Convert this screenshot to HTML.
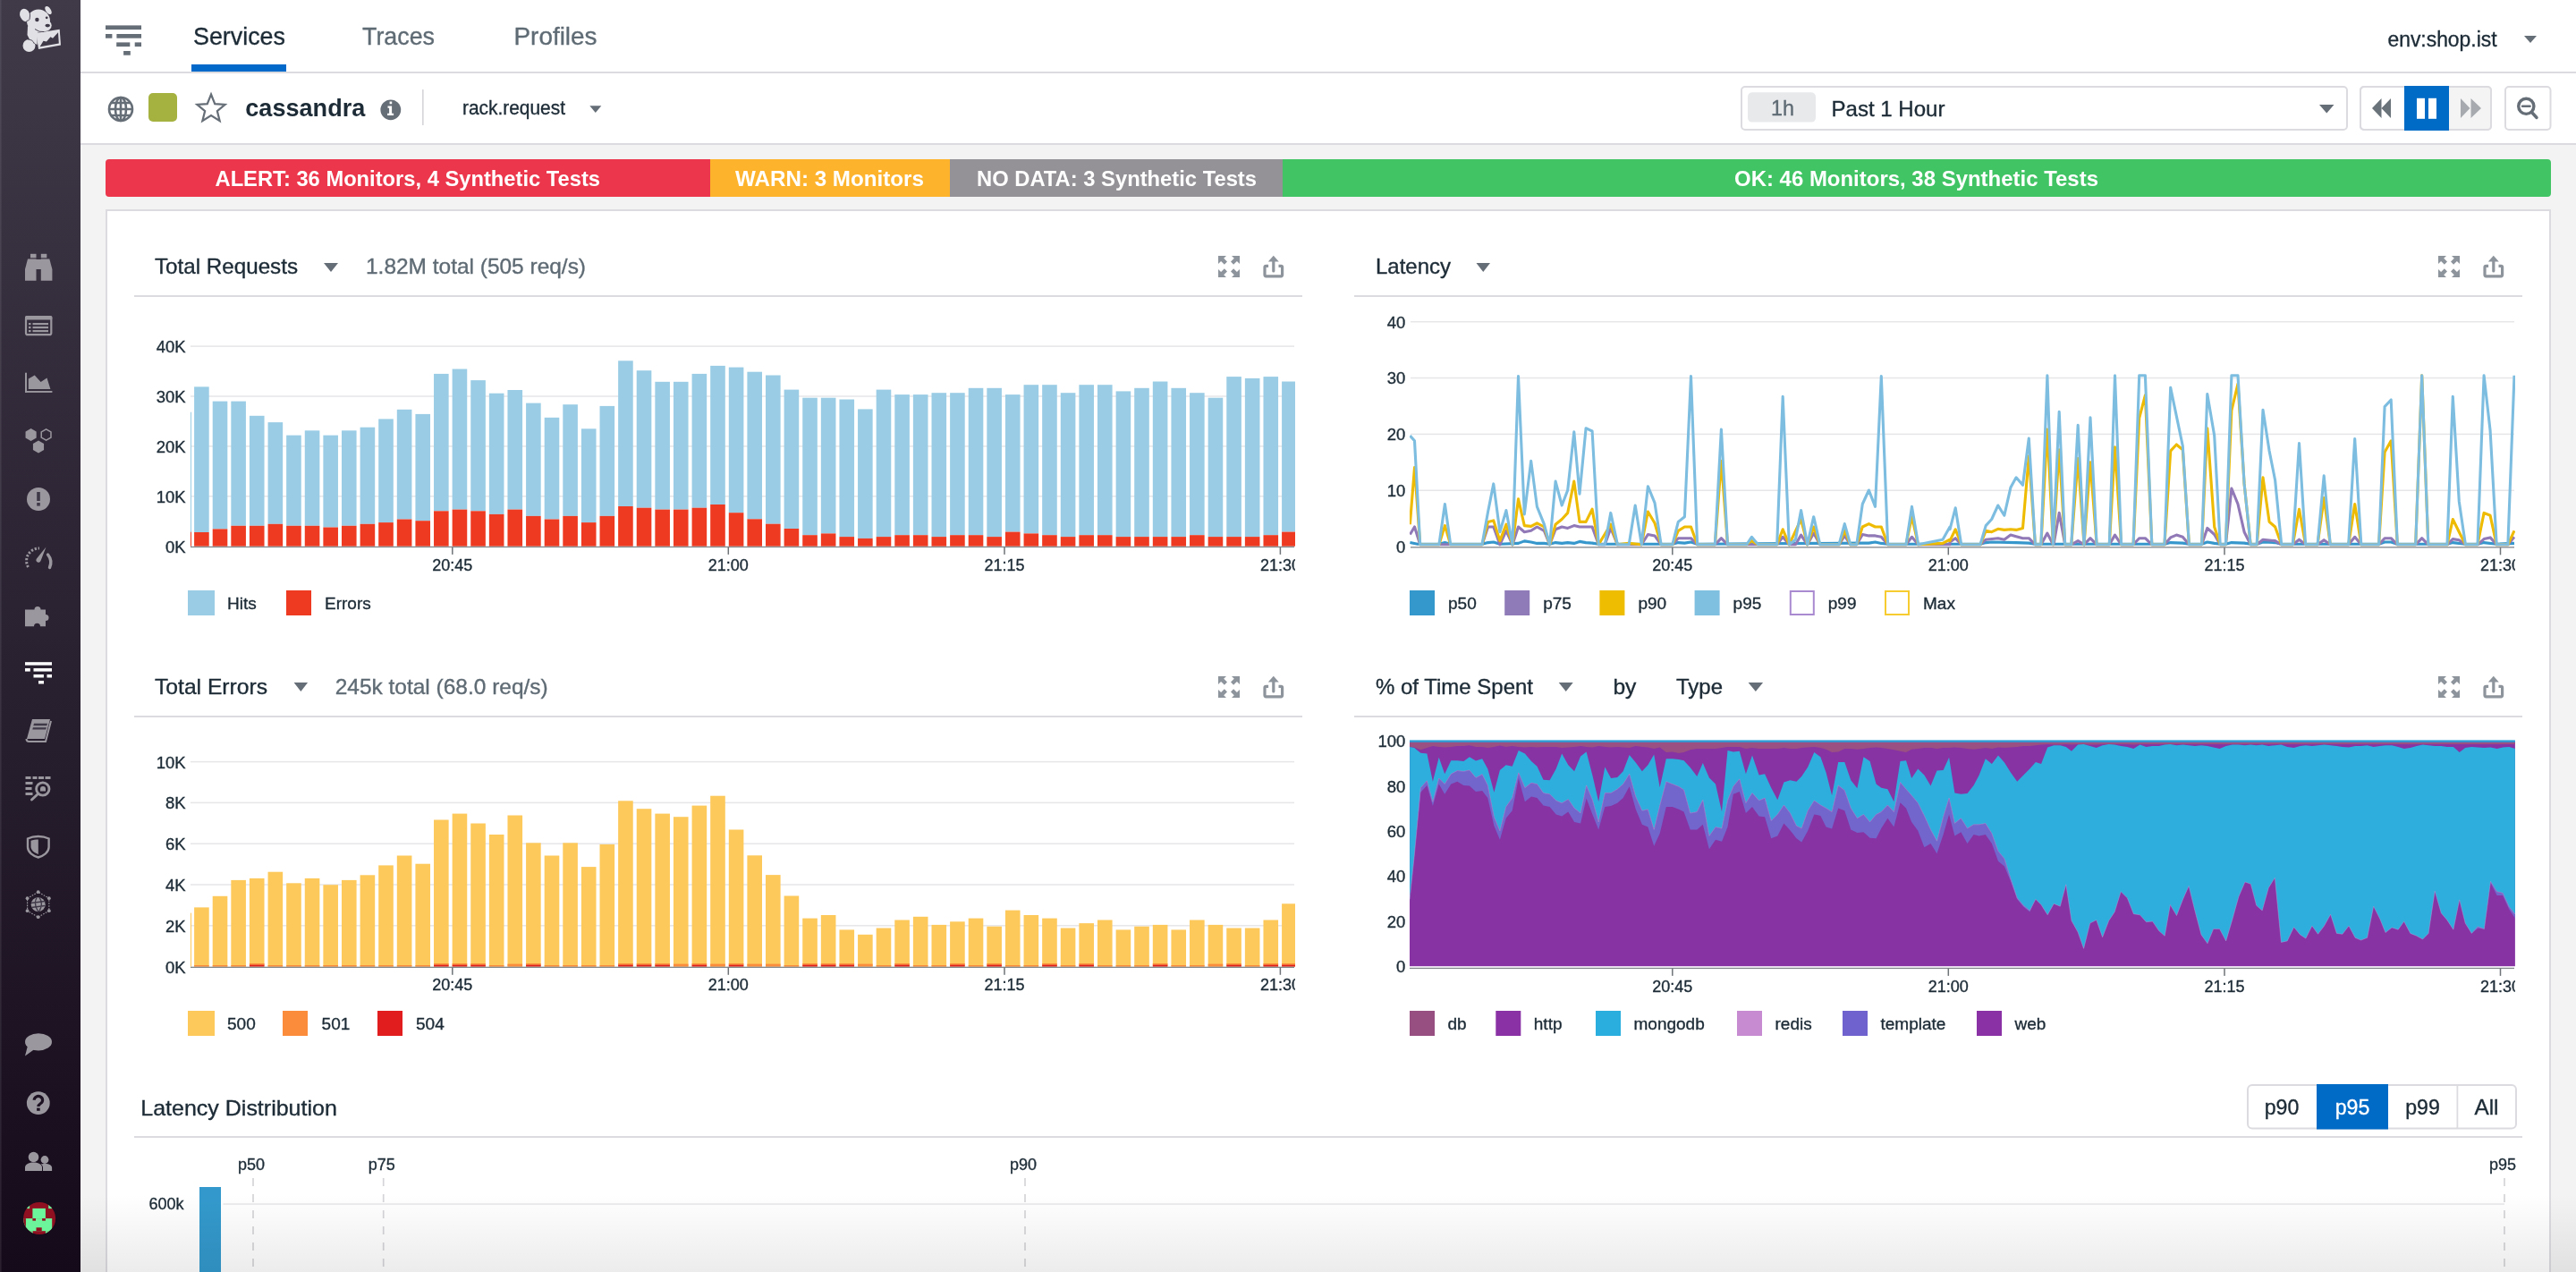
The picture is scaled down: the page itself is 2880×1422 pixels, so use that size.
<!DOCTYPE html>
<html><head><meta charset="utf-8"><title>cassandra | Datadog APM</title>
<style>html,body{margin:0;padding:0;width:2880px;height:1422px;overflow:hidden;background:#f3f3f3}
svg{display:block;font-family:"Liberation Sans", sans-serif;will-change:transform}</style></head>
<body><svg width="2880" height="1422" viewBox="0 0 2880 1422">
<rect x="0" y="0" width="2880" height="1422" fill="#f3f3f3"/>
<defs><linearGradient id="sb" x1="0" y1="0" x2="0" y2="1"><stop offset="0" stop-color="#3f3948"/><stop offset="1" stop-color="#150a1a"/></linearGradient><linearGradient id="fade" x1="0" y1="0" x2="0" y2="1"><stop offset="0" stop-color="#000" stop-opacity="0"/><stop offset="1" stop-color="#000" stop-opacity="0.075"/></linearGradient><clipPath id="c1"><rect x="213" y="340" width="1235" height="300"/></clipPath><clipPath id="c2"><rect x="213" y="820" width="1235" height="300"/></clipPath><clipPath id="c3"><rect x="1576" y="340" width="1236" height="300"/></clipPath><clipPath id="c4"><rect x="1576" y="820" width="1236" height="300"/></clipPath></defs>
<rect x="90" y="0" width="2790" height="80" fill="#ffffff"/>
<rect x="90" y="80" width="2790" height="2" fill="#dcdbe0"/>
<rect x="90" y="82" width="2790" height="78" fill="#ffffff"/>
<rect x="90" y="160" width="2790" height="2" fill="#dcdbe0"/>
<rect x="0" y="0" width="90" height="1422" fill="url(#sb)"/>
<g fill="#e1e0e4"><ellipse cx="28" cy="17" rx="5.6" ry="7.4" transform="rotate(-25 28 17)"/><ellipse cx="43" cy="23.5" rx="13" ry="13"/><ellipse cx="50.5" cy="28.5" rx="7.2" ry="6.4"/><ellipse cx="54" cy="11.5" rx="2.8" ry="5.2" transform="rotate(-35 54 11.5)"/><path d="M31 29L42 34L41.5 50L34 46L30.5 39Z"/><circle cx="32.5" cy="51" r="7"/><path d="M40.5 36.9L66.7 32.7L68 50.4L43 55Z"/></g>
<g fill="#3e3847"><circle cx="41.4" cy="22" r="2.2"/><circle cx="52.2" cy="19.8" r="1.4"/><ellipse cx="53.2" cy="28.6" rx="2.8" ry="1.8"/><path d="M44.6 52.2L48.5 45.8L52 46.5L56.5 41.2L59 42.8L65 36.3L65.8 48.6Z"/></g><g fill="none" stroke="#3e3847" stroke-width="0.9"><path d="M31.5 10.5Q34.5 14 33 21.5Q32 23.5 29.5 23.5"/><path d="M39 32.5Q44 36.5 49 35.5"/><path d="M31.5 44.2Q36.5 44 38.5 49"/></g>
<g fill="#9b979f"><rect x="34" y="283.8" width="6.5" height="4.5"/><rect x="45.8" y="283.8" width="6.5" height="4.5"/><path d="M31 289.5H40.5V313.7H28V301Z"/><path d="M45.8 289.5H55.3L58.4 301V313.7H45.8Z"/><rect x="40" y="290" width="6" height="11"/></g>
<g fill="none" stroke="#9b979f" stroke-width="2.2"><rect x="29" y="354.1" width="28.3" height="20.1" rx="2"/></g>
<g fill="#9b979f"><rect x="28" y="353" width="30.4" height="4.5" rx="1.5"/><rect x="32" y="361" width="2.5" height="2.2"/><rect x="36.5" y="361" width="17.5" height="2.2"/><rect x="32" y="365" width="2.5" height="2.2"/><rect x="36.5" y="365" width="17.5" height="2.2"/><rect x="32" y="369" width="2.5" height="2.2"/><rect x="36.5" y="369" width="17.5" height="2.2"/></g>
<g fill="#9b979f"><rect x="28" y="416.7" width="2" height="22.2"/><rect x="28" y="437" width="30.4" height="1.9"/><path d="M31.8 435V423.5L38.7 419.6L45.6 427L52.5 422.6L56.4 435Z"/></g>
<polygon points="40.66,489.50 34.60,493.00 28.54,489.50 28.54,482.50 34.60,479.00 40.66,482.50" fill="#9b979f"/>
<polygon points="49.06,503.00 43.00,506.50 36.94,503.00 36.94,496.00 43.00,492.50 49.06,496.00" fill="#9b979f"/>
<polygon points="56.97,489.10 51.60,492.20 46.23,489.10 46.23,482.90 51.60,479.80 56.97,482.90" fill="none" stroke="#9b979f" stroke-width="1.5"/>
<circle cx="43" cy="558" r="13" fill="#9b979f"/><rect x="41.2" y="550" width="3.6" height="10" fill="#3e3847"/><rect x="41.2" y="562" width="3.6" height="3.6" fill="#3e3847"/>
<path d="M31.5 634A14 14 0 0 1 44 613" fill="none" stroke="#9b979f" stroke-width="3" stroke-dasharray="2.2,1.8"/>
<path d="M53.5 620A14 14 0 0 1 55.5 634.5" fill="none" stroke="#9b979f" stroke-width="3.4" stroke-linecap="round"/>
<path d="M51.5 611.5L45.5 627A2.6 2.6 0 1 1 40.8 624.8Z" fill="#9b979f"/>
<path d="M28 681.5H38.5A3.5 3.5 0 1 1 45.5 681.5H51V687A3.2 3.2 0 1 1 51 694V700.3H45A3.5 3.5 0 1 0 38 700.3H28Z" fill="#9b979f"/>
<g fill="#fff"><rect x="28" y="740.2" width="30" height="3.5"/><rect x="28" y="747.1" width="5.8" height="3.5"/><rect x="37.5" y="747.1" width="20.5" height="3.5"/><rect x="37.5" y="754" width="11.4" height="3.5"/><rect x="52.5" y="754" width="5.5" height="3.5"/><rect x="43" y="761" width="6" height="3.5"/></g>
<g fill="#9b979f"><path d="M36 804H56L50 826H30Z"/></g>
<path d="M57 806L51 829H32.5a3 3 0 0 1 -3 -3" fill="none" stroke="#9b979f" stroke-width="2"/>
<path d="M38 808.7H53L52.4 811.3H37.3Z M36.9 813.2H51.9L51.3 815.6H36.3Z" fill="#3e3847"/>
<g fill="#9b979f"><rect x="28.5" y="868" width="6" height="3"/><rect x="36.5" y="868" width="5" height="3"/><rect x="43" y="868" width="6" height="3"/><rect x="50.5" y="868" width="6" height="3"/><rect x="28.5" y="874" width="8" height="3"/><rect x="28.5" y="880" width="7" height="3"/><rect x="28.5" y="886" width="8" height="3"/></g>
<circle cx="47.8" cy="882" r="7.2" fill="none" stroke="#9b979f" stroke-width="2.8"/><path d="M42.5 887.5L35.5 894" stroke="#9b979f" stroke-width="3" stroke-linecap="round"/><path d="M45 884.5V882A3 3 0 0 1 51 882V884.5Z" fill="#9b979f"/>
<path d="M42.8 935C37 935 33 936.5 31 937.5V947C31 953 37 957 42.8 958.5C48.5 957 54.6 953 54.6 947V937.5C52.5 936.5 48.5 935 42.8 935Z" fill="none" stroke="#9b979f" stroke-width="2.4"/>
<path d="M42.8 938.5V955C38.5 953.5 34.5 950.5 34.5 946.5V939.8C37 939 40 938.5 42.8 938.5Z" fill="#9b979f"/>
<g fill="none" stroke="#9b979f" stroke-width="1.2" stroke-dasharray="1.6,1.4"><polygon points="54.82,1018.20 42.70,1025.20 30.58,1018.20 30.58,1004.20 42.70,997.20 54.82,1004.20"/></g>
<g fill="#9b979f"><circle cx="54.82" cy="1018.20" r="1.9"/><circle cx="42.70" cy="1025.20" r="1.9"/><circle cx="30.58" cy="1018.20" r="1.9"/><circle cx="30.58" cy="1004.20" r="1.9"/><circle cx="42.70" cy="997.20" r="1.9"/><circle cx="54.82" cy="1004.20" r="1.9"/></g>
<circle cx="42.7" cy="1011.2" r="8" fill="#9b979f"/><path d="M34.7 1009.5L50.7 1007.5M35 1014.5L50.5 1012.5M41 1003.5Q37 1011 43 1019.2M44 1003.2Q49 1011 43.5 1019.2" stroke="#3e3847" stroke-width="1.3" fill="none"/>
<ellipse cx="43" cy="1164.8" rx="15" ry="9.6" fill="#9b979f"/><path d="M31 1169L28 1180.4L38.5 1173Z" fill="#9b979f"/>
<circle cx="42.8" cy="1233.1" r="12.9" fill="#9b979f"/>
<path d="M38.2 1229.8A4.7 4.4 0 1 1 45.5 1233.5C43.8 1234.6 42.9 1235.2 42.9 1237" fill="none" stroke="#1d1222" stroke-width="3.2"/><rect x="41.1" y="1238.6" width="3.6" height="3.2" fill="#1d1222"/>
<g fill="#9b979f"><circle cx="37.5" cy="1293.5" r="5.8"/><path d="M28 1309V1305C28 1302 31.5 1299.5 37.5 1299.5C43.5 1299.5 47 1302 47 1305V1309Z"/><circle cx="50" cy="1296.5" r="4.4"/><path d="M48 1309V1305.5C48 1303.5 46.8 1302.2 45.5 1301.6C46.5 1301.2 48 1301 50 1301C55.5 1301 58.1 1303 58.1 1305.5V1309Z"/></g>
<clipPath id="av"><circle cx="44.1" cy="1362" r="18"/></clipPath>
<g clip-path="url(#av)"><rect x="25" y="1343" width="38" height="38" fill="#8f1021"/><rect x="29.6" y="1346" width="3.5" height="5.1" fill="#6cf59a"/><rect x="54.2" y="1346" width="4.5" height="5.1" fill="#6cf59a"/><rect x="36.4" y="1350.9" width="14.5" height="11.3" fill="#6cf59a"/><rect x="25" y="1362.1" width="33.2" height="14.1" fill="#6cf59a"/><rect x="25" y="1376.2" width="11.7" height="6" fill="#6cf59a"/><rect x="50.9" y="1376.2" width="8" height="6" fill="#6cf59a"/><rect x="25" y="1362.1" width="3.9" height="10" fill="#8f1021"/><rect x="36.4" y="1362.1" width="3.6" height="2.6" fill="#8f1021"/><rect x="47.1" y="1362.1" width="3.8" height="2.6" fill="#8f1021"/><rect x="40.5" y="1372.3" width="6.2" height="4" fill="#8f1021"/></g>
<rect x="0" y="0" width="1.6" height="1422" fill="#ffffff" fill-opacity="0.09"/>
<rect x="118" y="28.4" width="40" height="4.7" fill="#656d76"/>
<rect x="118" y="38" width="7.4" height="4.7" fill="#656d76"/>
<rect x="130.4" y="38" width="27.6" height="4.7" fill="#656d76"/>
<rect x="130.2" y="47.4" width="15.1" height="4.7" fill="#656d76"/>
<rect x="150.7" y="47.4" width="7.3" height="4.7" fill="#656d76"/>
<rect x="138.1" y="57" width="7.7" height="4.7" fill="#656d76"/>
<text x="216" y="50.2" font-size="28" fill="#1c2b36" font-weight="normal" text-anchor="start" textLength="103" lengthAdjust="spacingAndGlyphs" stroke="#1c2b36" stroke-width="0.35">Services</text>
<rect x="214" y="72" width="106" height="8" fill="#0069c9"/>
<text x="405" y="50.2" font-size="28" fill="#5f6b74" font-weight="normal" text-anchor="start" textLength="81" lengthAdjust="spacingAndGlyphs" stroke="#5f6b74" stroke-width="0.35">Traces</text>
<text x="574.5" y="50.2" font-size="28" fill="#5f6b74" font-weight="normal" text-anchor="start" textLength="93" lengthAdjust="spacingAndGlyphs" stroke="#5f6b74" stroke-width="0.35">Profiles</text>
<text x="2669.5" y="52" font-size="23.5" fill="#1c2b36" font-weight="normal" text-anchor="start" textLength="122" lengthAdjust="spacingAndGlyphs" stroke="#1c2b36" stroke-width="0.35">env:shop.ist</text>
<path d="M2822 40L2836 40L2829.0 48Z" fill="#656d76"/>
<g fill="none" stroke="#656d76" stroke-width="2.6"><circle cx="135" cy="122" r="13"/><ellipse cx="135" cy="122" rx="6" ry="13"/><path d="M135 109V135M122 122H148M124 115H146M124 129H146"/></g>
<rect x="166" y="104" width="32" height="32" fill="#a5b240" rx="5"/>
<polygon points="236.00,105.50 240.23,116.08 251.60,116.83 242.85,124.12 245.64,135.17 236.00,129.10 226.36,135.17 229.15,124.12 220.40,116.83 231.77,116.08" fill="none" stroke="#656d76" stroke-width="2.2" stroke-linejoin="miter"/>
<text x="274.3" y="130.1" font-size="28" fill="#1c2b36" font-weight="bold" text-anchor="start" textLength="134" lengthAdjust="spacingAndGlyphs">cassandra</text>
<circle cx="436.8" cy="122.8" r="11.4" fill="#656d76"/>
<path d="M433.5 118.5h4.6v8.2h2v2.2h-7v-2.2h2v-6h-1.6z M435.6 113.5h2.6v2.8h-2.6z" fill="#fff"/>
<rect x="472" y="100" width="1.6" height="40" fill="#d5d5da"/>
<text x="517" y="127.8" font-size="21.5" fill="#1c2b36" font-weight="normal" text-anchor="start" textLength="115" lengthAdjust="spacingAndGlyphs" stroke="#1c2b36" stroke-width="0.35">rack.request</text>
<path d="M659.3 118.2L672.3 118.2L665.8 125.9Z" fill="#656d76"/>
<rect x="1947" y="97" width="677" height="48" rx="4" fill="#fff" stroke="#dcdbe0" stroke-width="2"/>
<rect x="1954" y="103.2" width="76" height="33.4" fill="#e8e9eb" rx="5"/>
<text x="1980" y="128.6" font-size="24" fill="#5f6b74" font-weight="normal" text-anchor="start" textLength="26" lengthAdjust="spacingAndGlyphs" stroke="#5f6b74" stroke-width="0.35">1h</text>
<text x="2047.5" y="130" font-size="24" fill="#1c2b36" font-weight="normal" text-anchor="start" textLength="127" lengthAdjust="spacingAndGlyphs" stroke="#1c2b36" stroke-width="0.35">Past 1 Hour</text>
<path d="M2593 117L2609.5 117L2601.25 126.5Z" fill="#656d76"/>
<rect x="2639" y="97" width="146" height="48" rx="4" fill="#fff" stroke="#dcdbe0" stroke-width="2"/>
<path d="M2738 97H2781a4 4 0 0 1 4 4V141a4 4 0 0 1 -4 4H2738Z" fill="#f4f4f4"/>
<rect x="2639" y="97" width="146" height="48" rx="4" fill="none" stroke="#dcdbe0" stroke-width="2"/>
<rect x="2688" y="96" width="50" height="50" fill="#006bc7"/>
<rect x="2702" y="109.8" width="9" height="23" fill="#fff"/>
<rect x="2715" y="109.8" width="9" height="23" fill="#fff"/>
<path d="M2652 121L2662.5 110V132Z M2662.5 121L2673 110V132Z" fill="#6b737a"/>
<path d="M2751 110L2761.5 121L2751 132Z M2762.5 110L2774 121L2762.5 132Z" fill="#a7abb0"/>
<rect x="2801" y="97" width="50.5" height="48" rx="4" fill="#fff" stroke="#dcdbe0" stroke-width="2"/>
<g fill="none" stroke="#656d76" stroke-width="3.4" stroke-linecap="round"><circle cx="2824.3" cy="118.8" r="8.6"/><path d="M2830.5 125.5L2836 131.5"/><path d="M2820 118.8H2828.6" stroke-width="2.4"/></g>
<path d="M122 178H794V220H122a4 4 0 0 1 -4 -4V182a4 4 0 0 1 4 -4Z" fill="#eb364b"/>
<rect x="794" y="178" width="268" height="42" fill="#fdb32b"/>
<rect x="1062" y="178" width="372" height="42" fill="#949296"/>
<path d="M1434 178H2848a4 4 0 0 1 4 4V216a4 4 0 0 1 -4 4H1434Z" fill="#41c464"/>
<text x="240.5" y="208.3" font-size="24.5" fill="#fff" font-weight="bold" text-anchor="start" textLength="430.5" lengthAdjust="spacingAndGlyphs">ALERT: 36 Monitors, 4 Synthetic Tests</text>
<text x="822" y="208.3" font-size="24.5" fill="#fff" font-weight="bold" text-anchor="start" textLength="211" lengthAdjust="spacingAndGlyphs">WARN: 3 Monitors</text>
<text x="1092" y="208.3" font-size="24.5" fill="#fff" font-weight="bold" text-anchor="start" textLength="313" lengthAdjust="spacingAndGlyphs">NO DATA: 3 Synthetic Tests</text>
<text x="1939" y="208.3" font-size="24.5" fill="#fff" font-weight="bold" text-anchor="start" textLength="407" lengthAdjust="spacingAndGlyphs">OK: 46 Monitors, 38 Synthetic Tests</text>
<rect x="119" y="235" width="2732" height="1300" fill="#fff" stroke="#dcdbe0" stroke-width="2"/>
<text x="173" y="306" font-size="24" fill="#1c2b36" font-weight="normal" text-anchor="start" textLength="160" lengthAdjust="spacingAndGlyphs" stroke="#1c2b36" stroke-width="0.35">Total Requests</text>
<path d="M362 294L378 294L370.0 304Z" fill="#656d76"/>
<text x="409" y="306" font-size="24" fill="#5f6b74" font-weight="normal" text-anchor="start" textLength="246" lengthAdjust="spacingAndGlyphs" stroke="#5f6b74" stroke-width="0.35">1.82M total (505 req/s)</text>
<g transform="translate(1361.5,285.5)" fill="#8e949b"><path d="M0.5 0.5H9.5L6.7 3.3L10.5 7.1L7.4 10.2L3.6 6.4L0.5 9.5Z"/><path d="M24.5 0.5H15.5L18.3 3.3L14.5 7.1L17.6 10.2L21.4 6.4L24.5 9.5Z"/><path d="M0.5 24.5H9.5L6.7 21.7L10.5 17.9L7.4 14.8L3.6 18.6L0.5 15.5Z"/><path d="M24.5 24.5H15.5L18.3 21.7L14.5 17.9L17.6 14.8L21.4 18.6L24.5 15.5Z"/></g>
<g transform="translate(1412.3,285.5)" fill="none" stroke="#8e949b" stroke-width="3.2"><path d="M5.8 11.8H3.2a1.5 1.5 0 0 0 -1.5 1.5V21.8a1.5 1.5 0 0 0 1.5 1.5H19.8a1.5 1.5 0 0 0 1.5 -1.5V13.3a1.5 1.5 0 0 0 -1.5 -1.5H17.2"/><path d="M11.5 17.5V5.5" stroke-linecap="round"/></g><path d="M1417.8 292.5L1423.8 285.8L1429.8 292.5Z" fill="#8e949b"/>
<rect x="150.00" y="330.00" width="1306.00" height="2.00" fill="#dcdbe0"/>
<rect x="213.00" y="386.35" width="1234.00" height="1.50" fill="#e6e6e9"/>
<text x="207.6" y="394.00000000000006" font-size="18.5" fill="#1c2b36" font-weight="normal" text-anchor="end" stroke="#1c2b36" stroke-width="0.35">40K</text>
<rect x="213.00" y="442.25" width="1234.00" height="1.50" fill="#e6e6e9"/>
<text x="207.6" y="449.90000000000003" font-size="18.5" fill="#1c2b36" font-weight="normal" text-anchor="end" stroke="#1c2b36" stroke-width="0.35">30K</text>
<rect x="213.00" y="498.15" width="1234.00" height="1.50" fill="#e6e6e9"/>
<text x="207.6" y="505.80000000000007" font-size="18.5" fill="#1c2b36" font-weight="normal" text-anchor="end" stroke="#1c2b36" stroke-width="0.35">20K</text>
<rect x="213.00" y="554.05" width="1234.00" height="1.50" fill="#e6e6e9"/>
<text x="207.6" y="561.7" font-size="18.5" fill="#1c2b36" font-weight="normal" text-anchor="end" stroke="#1c2b36" stroke-width="0.35">10K</text>
<text x="207.6" y="617.6" font-size="18.5" fill="#1c2b36" font-weight="normal" text-anchor="end" stroke="#1c2b36" stroke-width="0.35">0K</text>
<g clip-path="url(#c1)">
<rect x="197.39" y="460.70" width="16.60" height="150.00" fill="#9acde5"/>
<rect x="197.39" y="594.70" width="16.60" height="16.00" fill="#ee3a20"/>
<rect x="217.10" y="432.40" width="16.60" height="162.60" fill="#9acde5"/>
<rect x="217.10" y="595.00" width="16.60" height="15.70" fill="#ee3a20"/>
<rect x="237.71" y="448.60" width="16.60" height="142.80" fill="#9acde5"/>
<rect x="237.71" y="591.40" width="16.60" height="19.30" fill="#ee3a20"/>
<rect x="258.32" y="448.60" width="16.60" height="139.20" fill="#9acde5"/>
<rect x="258.32" y="587.80" width="16.60" height="22.90" fill="#ee3a20"/>
<rect x="278.93" y="464.80" width="16.60" height="123.00" fill="#9acde5"/>
<rect x="278.93" y="587.80" width="16.60" height="22.90" fill="#ee3a20"/>
<rect x="299.54" y="472.10" width="16.60" height="113.70" fill="#9acde5"/>
<rect x="299.54" y="585.80" width="16.60" height="24.90" fill="#ee3a20"/>
<rect x="320.15" y="486.60" width="16.60" height="101.20" fill="#9acde5"/>
<rect x="320.15" y="587.80" width="16.60" height="22.90" fill="#ee3a20"/>
<rect x="340.76" y="481.30" width="16.60" height="106.50" fill="#9acde5"/>
<rect x="340.76" y="587.80" width="16.60" height="22.90" fill="#ee3a20"/>
<rect x="361.37" y="486.60" width="16.60" height="102.90" fill="#9acde5"/>
<rect x="361.37" y="589.50" width="16.60" height="21.20" fill="#ee3a20"/>
<rect x="381.98" y="481.30" width="16.60" height="106.50" fill="#9acde5"/>
<rect x="381.98" y="587.80" width="16.60" height="22.90" fill="#ee3a20"/>
<rect x="402.59" y="477.70" width="16.60" height="108.10" fill="#9acde5"/>
<rect x="402.59" y="585.80" width="16.60" height="24.90" fill="#ee3a20"/>
<rect x="423.20" y="468.40" width="16.60" height="115.70" fill="#9acde5"/>
<rect x="423.20" y="584.10" width="16.60" height="26.60" fill="#ee3a20"/>
<rect x="443.81" y="457.80" width="16.60" height="122.70" fill="#9acde5"/>
<rect x="443.81" y="580.50" width="16.60" height="30.20" fill="#ee3a20"/>
<rect x="464.42" y="462.90" width="16.60" height="119.30" fill="#9acde5"/>
<rect x="464.42" y="582.20" width="16.60" height="28.50" fill="#ee3a20"/>
<rect x="485.03" y="417.90" width="16.60" height="153.40" fill="#9acde5"/>
<rect x="485.03" y="571.30" width="16.60" height="39.40" fill="#ee3a20"/>
<rect x="505.64" y="412.50" width="16.60" height="157.10" fill="#9acde5"/>
<rect x="505.64" y="569.60" width="16.60" height="41.10" fill="#ee3a20"/>
<rect x="526.25" y="425.10" width="16.60" height="146.20" fill="#9acde5"/>
<rect x="526.25" y="571.30" width="16.60" height="39.40" fill="#ee3a20"/>
<rect x="546.86" y="439.70" width="16.60" height="135.20" fill="#9acde5"/>
<rect x="546.86" y="574.90" width="16.60" height="35.80" fill="#ee3a20"/>
<rect x="567.47" y="436.00" width="16.60" height="133.60" fill="#9acde5"/>
<rect x="567.47" y="569.60" width="16.60" height="41.10" fill="#ee3a20"/>
<rect x="588.08" y="450.60" width="16.60" height="126.30" fill="#9acde5"/>
<rect x="588.08" y="576.90" width="16.60" height="33.80" fill="#ee3a20"/>
<rect x="608.69" y="466.80" width="16.60" height="113.70" fill="#9acde5"/>
<rect x="608.69" y="580.50" width="16.60" height="30.20" fill="#ee3a20"/>
<rect x="629.30" y="452.20" width="16.60" height="124.70" fill="#9acde5"/>
<rect x="629.30" y="576.90" width="16.60" height="33.80" fill="#ee3a20"/>
<rect x="649.91" y="479.30" width="16.60" height="104.80" fill="#9acde5"/>
<rect x="649.91" y="584.10" width="16.60" height="26.60" fill="#ee3a20"/>
<rect x="670.52" y="453.90" width="16.60" height="123.00" fill="#9acde5"/>
<rect x="670.52" y="576.90" width="16.60" height="33.80" fill="#ee3a20"/>
<rect x="691.13" y="403.30" width="16.60" height="162.70" fill="#9acde5"/>
<rect x="691.13" y="566.00" width="16.60" height="44.70" fill="#ee3a20"/>
<rect x="711.74" y="414.20" width="16.60" height="153.50" fill="#9acde5"/>
<rect x="711.74" y="567.70" width="16.60" height="43.00" fill="#ee3a20"/>
<rect x="732.35" y="426.80" width="16.60" height="142.80" fill="#9acde5"/>
<rect x="732.35" y="569.60" width="16.60" height="41.10" fill="#ee3a20"/>
<rect x="752.96" y="426.80" width="16.60" height="142.80" fill="#9acde5"/>
<rect x="752.96" y="569.60" width="16.60" height="41.10" fill="#ee3a20"/>
<rect x="773.57" y="417.90" width="16.60" height="149.80" fill="#9acde5"/>
<rect x="773.57" y="567.70" width="16.60" height="43.00" fill="#ee3a20"/>
<rect x="794.18" y="408.90" width="16.60" height="155.10" fill="#9acde5"/>
<rect x="794.18" y="564.00" width="16.60" height="46.70" fill="#ee3a20"/>
<rect x="814.79" y="410.60" width="16.60" height="162.60" fill="#9acde5"/>
<rect x="814.79" y="573.20" width="16.60" height="37.50" fill="#ee3a20"/>
<rect x="835.40" y="415.70" width="16.60" height="164.60" fill="#9acde5"/>
<rect x="835.40" y="580.30" width="16.60" height="30.40" fill="#ee3a20"/>
<rect x="856.01" y="419.50" width="16.60" height="166.20" fill="#9acde5"/>
<rect x="856.01" y="585.70" width="16.60" height="25.00" fill="#ee3a20"/>
<rect x="876.62" y="435.60" width="16.60" height="155.40" fill="#9acde5"/>
<rect x="876.62" y="591.00" width="16.60" height="19.70" fill="#ee3a20"/>
<rect x="897.23" y="444.70" width="16.60" height="153.50" fill="#9acde5"/>
<rect x="897.23" y="598.20" width="16.60" height="12.50" fill="#ee3a20"/>
<rect x="917.84" y="444.70" width="16.60" height="151.70" fill="#9acde5"/>
<rect x="917.84" y="596.40" width="16.60" height="14.30" fill="#ee3a20"/>
<rect x="938.45" y="446.50" width="16.60" height="153.60" fill="#9acde5"/>
<rect x="938.45" y="600.10" width="16.60" height="10.60" fill="#ee3a20"/>
<rect x="959.06" y="457.40" width="16.60" height="144.50" fill="#9acde5"/>
<rect x="959.06" y="601.90" width="16.60" height="8.80" fill="#ee3a20"/>
<rect x="979.67" y="435.60" width="16.60" height="164.50" fill="#9acde5"/>
<rect x="979.67" y="600.10" width="16.60" height="10.60" fill="#ee3a20"/>
<rect x="1000.28" y="441.10" width="16.60" height="157.10" fill="#9acde5"/>
<rect x="1000.28" y="598.20" width="16.60" height="12.50" fill="#ee3a20"/>
<rect x="1020.89" y="441.10" width="16.60" height="157.10" fill="#9acde5"/>
<rect x="1020.89" y="598.20" width="16.60" height="12.50" fill="#ee3a20"/>
<rect x="1041.50" y="439.20" width="16.60" height="160.90" fill="#9acde5"/>
<rect x="1041.50" y="600.10" width="16.60" height="10.60" fill="#ee3a20"/>
<rect x="1062.11" y="439.20" width="16.60" height="159.00" fill="#9acde5"/>
<rect x="1062.11" y="598.20" width="16.60" height="12.50" fill="#ee3a20"/>
<rect x="1082.72" y="433.80" width="16.60" height="164.40" fill="#9acde5"/>
<rect x="1082.72" y="598.20" width="16.60" height="12.50" fill="#ee3a20"/>
<rect x="1103.33" y="433.80" width="16.60" height="166.30" fill="#9acde5"/>
<rect x="1103.33" y="600.10" width="16.60" height="10.60" fill="#ee3a20"/>
<rect x="1123.94" y="441.10" width="16.60" height="153.50" fill="#9acde5"/>
<rect x="1123.94" y="594.60" width="16.60" height="16.10" fill="#ee3a20"/>
<rect x="1144.55" y="430.20" width="16.60" height="166.20" fill="#9acde5"/>
<rect x="1144.55" y="596.40" width="16.60" height="14.30" fill="#ee3a20"/>
<rect x="1165.16" y="430.20" width="16.60" height="168.00" fill="#9acde5"/>
<rect x="1165.16" y="598.20" width="16.60" height="12.50" fill="#ee3a20"/>
<rect x="1185.77" y="439.20" width="16.60" height="160.90" fill="#9acde5"/>
<rect x="1185.77" y="600.10" width="16.60" height="10.60" fill="#ee3a20"/>
<rect x="1206.38" y="430.20" width="16.60" height="168.00" fill="#9acde5"/>
<rect x="1206.38" y="598.20" width="16.60" height="12.50" fill="#ee3a20"/>
<rect x="1226.99" y="430.20" width="16.60" height="168.00" fill="#9acde5"/>
<rect x="1226.99" y="598.20" width="16.60" height="12.50" fill="#ee3a20"/>
<rect x="1247.60" y="437.40" width="16.60" height="162.70" fill="#9acde5"/>
<rect x="1247.60" y="600.10" width="16.60" height="10.60" fill="#ee3a20"/>
<rect x="1268.21" y="433.80" width="16.60" height="166.30" fill="#9acde5"/>
<rect x="1268.21" y="600.10" width="16.60" height="10.60" fill="#ee3a20"/>
<rect x="1288.82" y="426.50" width="16.60" height="173.60" fill="#9acde5"/>
<rect x="1288.82" y="600.10" width="16.60" height="10.60" fill="#ee3a20"/>
<rect x="1309.43" y="433.80" width="16.60" height="166.30" fill="#9acde5"/>
<rect x="1309.43" y="600.10" width="16.60" height="10.60" fill="#ee3a20"/>
<rect x="1330.04" y="439.20" width="16.60" height="159.00" fill="#9acde5"/>
<rect x="1330.04" y="598.20" width="16.60" height="12.50" fill="#ee3a20"/>
<rect x="1350.65" y="444.70" width="16.60" height="155.40" fill="#9acde5"/>
<rect x="1350.65" y="600.10" width="16.60" height="10.60" fill="#ee3a20"/>
<rect x="1371.26" y="421.10" width="16.60" height="179.00" fill="#9acde5"/>
<rect x="1371.26" y="600.10" width="16.60" height="10.60" fill="#ee3a20"/>
<rect x="1391.87" y="422.90" width="16.60" height="177.20" fill="#9acde5"/>
<rect x="1391.87" y="600.10" width="16.60" height="10.60" fill="#ee3a20"/>
<rect x="1412.48" y="421.10" width="16.60" height="177.10" fill="#9acde5"/>
<rect x="1412.48" y="598.20" width="16.60" height="12.50" fill="#ee3a20"/>
<rect x="1433.09" y="426.50" width="16.60" height="168.10" fill="#9acde5"/>
<rect x="1433.09" y="594.60" width="16.60" height="16.10" fill="#ee3a20"/>
</g>
<rect x="213.00" y="610.80" width="1234.00" height="1.30" fill="#80868a"/>
<rect x="505.05" y="611.70" width="1.50" height="8.20" fill="#6f7478"/>
<text x="505.8" y="637.5" font-size="18" fill="#1c2b36" font-weight="normal" text-anchor="middle" stroke="#1c2b36" stroke-width="0.35">20:45</text>
<rect x="813.55" y="611.70" width="1.50" height="8.20" fill="#6f7478"/>
<text x="814.3" y="637.5" font-size="18" fill="#1c2b36" font-weight="normal" text-anchor="middle" stroke="#1c2b36" stroke-width="0.35">21:00</text>
<rect x="1122.25" y="611.70" width="1.50" height="8.20" fill="#6f7478"/>
<text x="1123" y="637.5" font-size="18" fill="#1c2b36" font-weight="normal" text-anchor="middle" stroke="#1c2b36" stroke-width="0.35">21:15</text>
<rect x="1430.65" y="611.70" width="1.50" height="8.20" fill="#6f7478"/>
<text x="1431.4" y="637.5" font-size="18" fill="#1c2b36" font-weight="normal" text-anchor="middle" stroke="#1c2b36" stroke-width="0.35">21:30</text>
<rect x="1448.00" y="612.00" width="14.00" height="40.00" fill="#fff"/>
<rect x="210.00" y="660.00" width="30.00" height="28.00" fill="#9acde5"/>
<text x="254" y="680.5" font-size="19" fill="#1c2b36" font-weight="normal" text-anchor="start" stroke="#1c2b36" stroke-width="0.35">Hits</text>
<rect x="320.00" y="660.00" width="28.00" height="28.00" fill="#ee3a20"/>
<text x="363" y="680.5" font-size="19" fill="#1c2b36" font-weight="normal" text-anchor="start" stroke="#1c2b36" stroke-width="0.35">Errors</text>
<text x="173" y="776" font-size="24" fill="#1c2b36" font-weight="normal" text-anchor="start" textLength="126" lengthAdjust="spacingAndGlyphs" stroke="#1c2b36" stroke-width="0.35">Total Errors</text>
<path d="M328.6 763L344.1 763L336.35 773Z" fill="#656d76"/>
<text x="374.7" y="776" font-size="24" fill="#5f6b74" font-weight="normal" text-anchor="start" textLength="238" lengthAdjust="spacingAndGlyphs" stroke="#5f6b74" stroke-width="0.35">245k total (68.0 req/s)</text>
<g transform="translate(1361.5,755.5)" fill="#8e949b"><path d="M0.5 0.5H9.5L6.7 3.3L10.5 7.1L7.4 10.2L3.6 6.4L0.5 9.5Z"/><path d="M24.5 0.5H15.5L18.3 3.3L14.5 7.1L17.6 10.2L21.4 6.4L24.5 9.5Z"/><path d="M0.5 24.5H9.5L6.7 21.7L10.5 17.9L7.4 14.8L3.6 18.6L0.5 15.5Z"/><path d="M24.5 24.5H15.5L18.3 21.7L14.5 17.9L17.6 14.8L21.4 18.6L24.5 15.5Z"/></g>
<g transform="translate(1412.3,755.5)" fill="none" stroke="#8e949b" stroke-width="3.2"><path d="M5.8 11.8H3.2a1.5 1.5 0 0 0 -1.5 1.5V21.8a1.5 1.5 0 0 0 1.5 1.5H19.8a1.5 1.5 0 0 0 1.5 -1.5V13.3a1.5 1.5 0 0 0 -1.5 -1.5H17.2"/><path d="M11.5 17.5V5.5" stroke-linecap="round"/></g><path d="M1417.8 762.5L1423.8 755.8L1429.8 762.5Z" fill="#8e949b"/>
<rect x="150.00" y="800.00" width="1306.00" height="2.00" fill="#dcdbe0"/>
<rect x="213.00" y="850.85" width="1234.00" height="1.50" fill="#e6e6e9"/>
<text x="207.6" y="858.4999999999999" font-size="18.5" fill="#1c2b36" font-weight="normal" text-anchor="end" stroke="#1c2b36" stroke-width="0.35">10K</text>
<rect x="213.00" y="896.65" width="1234.00" height="1.50" fill="#e6e6e9"/>
<text x="207.6" y="904.2999999999998" font-size="18.5" fill="#1c2b36" font-weight="normal" text-anchor="end" stroke="#1c2b36" stroke-width="0.35">8K</text>
<rect x="213.00" y="942.45" width="1234.00" height="1.50" fill="#e6e6e9"/>
<text x="207.6" y="950.0999999999999" font-size="18.5" fill="#1c2b36" font-weight="normal" text-anchor="end" stroke="#1c2b36" stroke-width="0.35">6K</text>
<rect x="213.00" y="988.25" width="1234.00" height="1.50" fill="#e6e6e9"/>
<text x="207.6" y="995.8999999999999" font-size="18.5" fill="#1c2b36" font-weight="normal" text-anchor="end" stroke="#1c2b36" stroke-width="0.35">4K</text>
<rect x="213.00" y="1034.05" width="1234.00" height="1.50" fill="#e6e6e9"/>
<text x="207.6" y="1041.7" font-size="18.5" fill="#1c2b36" font-weight="normal" text-anchor="end" stroke="#1c2b36" stroke-width="0.35">2K</text>
<text x="207.6" y="1087.5" font-size="18.5" fill="#1c2b36" font-weight="normal" text-anchor="end" stroke="#1c2b36" stroke-width="0.35">0K</text>
<g clip-path="url(#c2)">
<rect x="197.39" y="1020.60" width="16.60" height="60.00" fill="#fdc95b"/>
<rect x="217.10" y="1014.40" width="16.60" height="66.20" fill="#fdc95b"/>
<rect x="217.10" y="1079.00" width="16.60" height="1.60" fill="#fa8c3c"/>
<rect x="237.71" y="1001.80" width="16.60" height="78.80" fill="#fdc95b"/>
<rect x="237.71" y="1079.00" width="16.60" height="1.60" fill="#fa8c3c"/>
<rect x="258.32" y="983.90" width="16.60" height="96.70" fill="#fdc95b"/>
<rect x="258.32" y="1079.00" width="16.60" height="1.60" fill="#fa8c3c"/>
<rect x="278.93" y="981.90" width="16.60" height="98.70" fill="#fdc95b"/>
<rect x="278.93" y="1077.00" width="16.60" height="1.60" fill="#fa8c3c"/>
<rect x="278.93" y="1078.60" width="16.60" height="2.00" fill="#e11d1d"/>
<rect x="299.54" y="974.70" width="16.60" height="105.90" fill="#fdc95b"/>
<rect x="299.54" y="1079.00" width="16.60" height="1.60" fill="#fa8c3c"/>
<rect x="320.15" y="987.30" width="16.60" height="93.30" fill="#fdc95b"/>
<rect x="320.15" y="1079.00" width="16.60" height="1.60" fill="#fa8c3c"/>
<rect x="340.76" y="981.90" width="16.60" height="98.70" fill="#fdc95b"/>
<rect x="340.76" y="1079.00" width="16.60" height="1.60" fill="#fa8c3c"/>
<rect x="361.37" y="989.20" width="16.60" height="91.40" fill="#fdc95b"/>
<rect x="361.37" y="1079.00" width="16.60" height="1.60" fill="#fa8c3c"/>
<rect x="381.98" y="983.90" width="16.60" height="96.70" fill="#fdc95b"/>
<rect x="381.98" y="1079.00" width="16.60" height="1.60" fill="#fa8c3c"/>
<rect x="402.59" y="978.30" width="16.60" height="102.30" fill="#fdc95b"/>
<rect x="402.59" y="1079.00" width="16.60" height="1.60" fill="#fa8c3c"/>
<rect x="423.20" y="967.40" width="16.60" height="113.20" fill="#fdc95b"/>
<rect x="423.20" y="1079.00" width="16.60" height="1.60" fill="#fa8c3c"/>
<rect x="443.81" y="956.50" width="16.60" height="124.10" fill="#fdc95b"/>
<rect x="443.81" y="1079.00" width="16.60" height="1.60" fill="#fa8c3c"/>
<rect x="464.42" y="965.70" width="16.60" height="114.90" fill="#fdc95b"/>
<rect x="464.42" y="1079.00" width="16.60" height="1.60" fill="#fa8c3c"/>
<rect x="485.03" y="916.50" width="16.60" height="164.10" fill="#fdc95b"/>
<rect x="485.03" y="1077.00" width="16.60" height="1.60" fill="#fa8c3c"/>
<rect x="485.03" y="1078.60" width="16.60" height="2.00" fill="#e11d1d"/>
<rect x="505.64" y="909.60" width="16.60" height="171.00" fill="#fdc95b"/>
<rect x="505.64" y="1077.00" width="16.60" height="1.60" fill="#fa8c3c"/>
<rect x="505.64" y="1078.60" width="16.60" height="2.00" fill="#e11d1d"/>
<rect x="526.25" y="920.50" width="16.60" height="160.10" fill="#fdc95b"/>
<rect x="526.25" y="1077.00" width="16.60" height="1.60" fill="#fa8c3c"/>
<rect x="526.25" y="1078.60" width="16.60" height="2.00" fill="#e11d1d"/>
<rect x="546.86" y="933.00" width="16.60" height="147.60" fill="#fdc95b"/>
<rect x="546.86" y="1079.00" width="16.60" height="1.60" fill="#fa8c3c"/>
<rect x="567.47" y="911.50" width="16.60" height="169.10" fill="#fdc95b"/>
<rect x="567.47" y="1077.60" width="16.60" height="3.00" fill="#fa8c3c"/>
<rect x="588.08" y="942.30" width="16.60" height="138.30" fill="#fdc95b"/>
<rect x="588.08" y="1077.00" width="16.60" height="1.60" fill="#fa8c3c"/>
<rect x="588.08" y="1078.60" width="16.60" height="2.00" fill="#e11d1d"/>
<rect x="608.69" y="956.50" width="16.60" height="124.10" fill="#fdc95b"/>
<rect x="608.69" y="1079.00" width="16.60" height="1.60" fill="#fa8c3c"/>
<rect x="629.30" y="942.30" width="16.60" height="138.30" fill="#fdc95b"/>
<rect x="629.30" y="1079.00" width="16.60" height="1.60" fill="#fa8c3c"/>
<rect x="649.91" y="969.10" width="16.60" height="111.50" fill="#fdc95b"/>
<rect x="649.91" y="1079.00" width="16.60" height="1.60" fill="#fa8c3c"/>
<rect x="670.52" y="943.90" width="16.60" height="136.70" fill="#fdc95b"/>
<rect x="670.52" y="1079.00" width="16.60" height="1.60" fill="#fa8c3c"/>
<rect x="691.13" y="895.30" width="16.60" height="185.30" fill="#fdc95b"/>
<rect x="691.13" y="1077.00" width="16.60" height="1.60" fill="#fa8c3c"/>
<rect x="691.13" y="1078.60" width="16.60" height="2.00" fill="#e11d1d"/>
<rect x="711.74" y="904.20" width="16.60" height="176.40" fill="#fdc95b"/>
<rect x="711.74" y="1077.00" width="16.60" height="1.60" fill="#fa8c3c"/>
<rect x="711.74" y="1078.60" width="16.60" height="2.00" fill="#e11d1d"/>
<rect x="732.35" y="909.60" width="16.60" height="171.00" fill="#fdc95b"/>
<rect x="732.35" y="1077.00" width="16.60" height="1.60" fill="#fa8c3c"/>
<rect x="732.35" y="1078.60" width="16.60" height="2.00" fill="#e11d1d"/>
<rect x="752.96" y="913.20" width="16.60" height="167.40" fill="#fdc95b"/>
<rect x="752.96" y="1077.60" width="16.60" height="3.00" fill="#fa8c3c"/>
<rect x="773.57" y="900.60" width="16.60" height="180.00" fill="#fdc95b"/>
<rect x="773.57" y="1077.00" width="16.60" height="1.60" fill="#fa8c3c"/>
<rect x="773.57" y="1078.60" width="16.60" height="2.00" fill="#e11d1d"/>
<rect x="794.18" y="889.70" width="16.60" height="190.90" fill="#fdc95b"/>
<rect x="794.18" y="1077.60" width="16.60" height="3.00" fill="#fa8c3c"/>
<rect x="814.79" y="927.50" width="16.60" height="153.10" fill="#fdc95b"/>
<rect x="814.79" y="1077.00" width="16.60" height="1.60" fill="#fa8c3c"/>
<rect x="814.79" y="1078.60" width="16.60" height="2.00" fill="#e11d1d"/>
<rect x="835.40" y="956.30" width="16.60" height="124.30" fill="#fdc95b"/>
<rect x="835.40" y="1077.60" width="16.60" height="3.00" fill="#fa8c3c"/>
<rect x="856.01" y="978.10" width="16.60" height="102.50" fill="#fdc95b"/>
<rect x="856.01" y="1077.60" width="16.60" height="3.00" fill="#fa8c3c"/>
<rect x="876.62" y="1001.50" width="16.60" height="79.10" fill="#fdc95b"/>
<rect x="876.62" y="1079.00" width="16.60" height="1.60" fill="#fa8c3c"/>
<rect x="897.23" y="1026.60" width="16.60" height="54.00" fill="#fdc95b"/>
<rect x="897.23" y="1077.00" width="16.60" height="1.60" fill="#fa8c3c"/>
<rect x="897.23" y="1078.60" width="16.60" height="2.00" fill="#e11d1d"/>
<rect x="917.84" y="1023.00" width="16.60" height="57.60" fill="#fdc95b"/>
<rect x="917.84" y="1077.00" width="16.60" height="1.60" fill="#fa8c3c"/>
<rect x="917.84" y="1078.60" width="16.60" height="2.00" fill="#e11d1d"/>
<rect x="938.45" y="1039.40" width="16.60" height="41.20" fill="#fdc95b"/>
<rect x="938.45" y="1077.00" width="16.60" height="1.60" fill="#fa8c3c"/>
<rect x="938.45" y="1078.60" width="16.60" height="2.00" fill="#e11d1d"/>
<rect x="959.06" y="1044.80" width="16.60" height="35.80" fill="#fdc95b"/>
<rect x="959.06" y="1077.60" width="16.60" height="3.00" fill="#fa8c3c"/>
<rect x="979.67" y="1037.50" width="16.60" height="43.10" fill="#fdc95b"/>
<rect x="979.67" y="1079.00" width="16.60" height="1.60" fill="#fa8c3c"/>
<rect x="1000.28" y="1028.50" width="16.60" height="52.10" fill="#fdc95b"/>
<rect x="1000.28" y="1077.00" width="16.60" height="1.60" fill="#fa8c3c"/>
<rect x="1000.28" y="1078.60" width="16.60" height="2.00" fill="#e11d1d"/>
<rect x="1020.89" y="1024.80" width="16.60" height="55.80" fill="#fdc95b"/>
<rect x="1020.89" y="1079.00" width="16.60" height="1.60" fill="#fa8c3c"/>
<rect x="1041.50" y="1033.90" width="16.60" height="46.70" fill="#fdc95b"/>
<rect x="1041.50" y="1079.00" width="16.60" height="1.60" fill="#fa8c3c"/>
<rect x="1062.11" y="1030.30" width="16.60" height="50.30" fill="#fdc95b"/>
<rect x="1062.11" y="1077.00" width="16.60" height="1.60" fill="#fa8c3c"/>
<rect x="1062.11" y="1078.60" width="16.60" height="2.00" fill="#e11d1d"/>
<rect x="1082.72" y="1026.60" width="16.60" height="54.00" fill="#fdc95b"/>
<rect x="1082.72" y="1079.00" width="16.60" height="1.60" fill="#fa8c3c"/>
<rect x="1103.33" y="1035.70" width="16.60" height="44.90" fill="#fdc95b"/>
<rect x="1103.33" y="1077.00" width="16.60" height="1.60" fill="#fa8c3c"/>
<rect x="1103.33" y="1078.60" width="16.60" height="2.00" fill="#e11d1d"/>
<rect x="1123.94" y="1017.60" width="16.60" height="63.00" fill="#fdc95b"/>
<rect x="1123.94" y="1079.00" width="16.60" height="1.60" fill="#fa8c3c"/>
<rect x="1144.55" y="1023.00" width="16.60" height="57.60" fill="#fdc95b"/>
<rect x="1144.55" y="1079.00" width="16.60" height="1.60" fill="#fa8c3c"/>
<rect x="1165.16" y="1026.60" width="16.60" height="54.00" fill="#fdc95b"/>
<rect x="1165.16" y="1077.00" width="16.60" height="1.60" fill="#fa8c3c"/>
<rect x="1165.16" y="1078.60" width="16.60" height="2.00" fill="#e11d1d"/>
<rect x="1185.77" y="1037.50" width="16.60" height="43.10" fill="#fdc95b"/>
<rect x="1185.77" y="1079.00" width="16.60" height="1.60" fill="#fa8c3c"/>
<rect x="1206.38" y="1032.10" width="16.60" height="48.50" fill="#fdc95b"/>
<rect x="1206.38" y="1077.00" width="16.60" height="1.60" fill="#fa8c3c"/>
<rect x="1206.38" y="1078.60" width="16.60" height="2.00" fill="#e11d1d"/>
<rect x="1226.99" y="1028.50" width="16.60" height="52.10" fill="#fdc95b"/>
<rect x="1226.99" y="1079.00" width="16.60" height="1.60" fill="#fa8c3c"/>
<rect x="1247.60" y="1039.40" width="16.60" height="41.20" fill="#fdc95b"/>
<rect x="1247.60" y="1079.00" width="16.60" height="1.60" fill="#fa8c3c"/>
<rect x="1268.21" y="1035.70" width="16.60" height="44.90" fill="#fdc95b"/>
<rect x="1268.21" y="1079.00" width="16.60" height="1.60" fill="#fa8c3c"/>
<rect x="1288.82" y="1033.90" width="16.60" height="46.70" fill="#fdc95b"/>
<rect x="1288.82" y="1077.00" width="16.60" height="1.60" fill="#fa8c3c"/>
<rect x="1288.82" y="1078.60" width="16.60" height="2.00" fill="#e11d1d"/>
<rect x="1309.43" y="1039.40" width="16.60" height="41.20" fill="#fdc95b"/>
<rect x="1309.43" y="1079.00" width="16.60" height="1.60" fill="#fa8c3c"/>
<rect x="1330.04" y="1028.50" width="16.60" height="52.10" fill="#fdc95b"/>
<rect x="1330.04" y="1079.00" width="16.60" height="1.60" fill="#fa8c3c"/>
<rect x="1350.65" y="1033.90" width="16.60" height="46.70" fill="#fdc95b"/>
<rect x="1350.65" y="1077.60" width="16.60" height="3.00" fill="#fa8c3c"/>
<rect x="1371.26" y="1037.50" width="16.60" height="43.10" fill="#fdc95b"/>
<rect x="1371.26" y="1077.00" width="16.60" height="1.60" fill="#fa8c3c"/>
<rect x="1371.26" y="1078.60" width="16.60" height="2.00" fill="#e11d1d"/>
<rect x="1391.87" y="1037.50" width="16.60" height="43.10" fill="#fdc95b"/>
<rect x="1391.87" y="1079.00" width="16.60" height="1.60" fill="#fa8c3c"/>
<rect x="1412.48" y="1028.50" width="16.60" height="52.10" fill="#fdc95b"/>
<rect x="1412.48" y="1077.00" width="16.60" height="1.60" fill="#fa8c3c"/>
<rect x="1412.48" y="1078.60" width="16.60" height="2.00" fill="#e11d1d"/>
<rect x="1433.09" y="1010.30" width="16.60" height="70.30" fill="#fdc95b"/>
<rect x="1433.09" y="1077.00" width="16.60" height="1.60" fill="#fa8c3c"/>
<rect x="1433.09" y="1078.60" width="16.60" height="2.00" fill="#e11d1d"/>
</g>
<rect x="213.00" y="1080.70" width="1234.00" height="1.30" fill="#80868a"/>
<rect x="505.05" y="1081.60" width="1.50" height="8.20" fill="#6f7478"/>
<text x="505.8" y="1107.3999999999999" font-size="18" fill="#1c2b36" font-weight="normal" text-anchor="middle" stroke="#1c2b36" stroke-width="0.35">20:45</text>
<rect x="813.55" y="1081.60" width="1.50" height="8.20" fill="#6f7478"/>
<text x="814.3" y="1107.3999999999999" font-size="18" fill="#1c2b36" font-weight="normal" text-anchor="middle" stroke="#1c2b36" stroke-width="0.35">21:00</text>
<rect x="1122.25" y="1081.60" width="1.50" height="8.20" fill="#6f7478"/>
<text x="1123" y="1107.3999999999999" font-size="18" fill="#1c2b36" font-weight="normal" text-anchor="middle" stroke="#1c2b36" stroke-width="0.35">21:15</text>
<rect x="1430.65" y="1081.60" width="1.50" height="8.20" fill="#6f7478"/>
<text x="1431.4" y="1107.3999999999999" font-size="18" fill="#1c2b36" font-weight="normal" text-anchor="middle" stroke="#1c2b36" stroke-width="0.35">21:30</text>
<rect x="1448.00" y="1082.00" width="14.00" height="40.00" fill="#fff"/>
<rect x="210.00" y="1130.00" width="30.00" height="28.00" fill="#fdc95b"/>
<text x="254" y="1150.5" font-size="19" fill="#1c2b36" font-weight="normal" text-anchor="start" stroke="#1c2b36" stroke-width="0.35">500</text>
<rect x="316.00" y="1130.00" width="28.00" height="28.00" fill="#fa8c3c"/>
<text x="359.6" y="1150.5" font-size="19" fill="#1c2b36" font-weight="normal" text-anchor="start" stroke="#1c2b36" stroke-width="0.35">501</text>
<rect x="422.00" y="1130.00" width="28.00" height="28.00" fill="#e11d1d"/>
<text x="465" y="1150.5" font-size="19" fill="#1c2b36" font-weight="normal" text-anchor="start" stroke="#1c2b36" stroke-width="0.35">504</text>
<text x="1538" y="306" font-size="24" fill="#1c2b36" font-weight="normal" text-anchor="start" textLength="84" lengthAdjust="spacingAndGlyphs" stroke="#1c2b36" stroke-width="0.35">Latency</text>
<path d="M1650.5 294L1666.0 294L1658.25 304Z" fill="#656d76"/>
<g transform="translate(2725.5,285.5)" fill="#8e949b"><path d="M0.5 0.5H9.5L6.7 3.3L10.5 7.1L7.4 10.2L3.6 6.4L0.5 9.5Z"/><path d="M24.5 0.5H15.5L18.3 3.3L14.5 7.1L17.6 10.2L21.4 6.4L24.5 9.5Z"/><path d="M0.5 24.5H9.5L6.7 21.7L10.5 17.9L7.4 14.8L3.6 18.6L0.5 15.5Z"/><path d="M24.5 24.5H15.5L18.3 21.7L14.5 17.9L17.6 14.8L21.4 18.6L24.5 15.5Z"/></g>
<g transform="translate(2776.3,285.5)" fill="none" stroke="#8e949b" stroke-width="3.2"><path d="M5.8 11.8H3.2a1.5 1.5 0 0 0 -1.5 1.5V21.8a1.5 1.5 0 0 0 1.5 1.5H19.8a1.5 1.5 0 0 0 1.5 -1.5V13.3a1.5 1.5 0 0 0 -1.5 -1.5H17.2"/><path d="M11.5 17.5V5.5" stroke-linecap="round"/></g><path d="M2781.8 292.5L2787.8 285.8L2793.8 292.5Z" fill="#8e949b"/>
<rect x="1514.00" y="330.00" width="1306.00" height="2.00" fill="#dcdbe0"/>
<rect x="1577.00" y="358.95" width="1234.00" height="1.50" fill="#e6e6e9"/>
<text x="1571.4" y="366.6" font-size="18.5" fill="#1c2b36" font-weight="normal" text-anchor="end" stroke="#1c2b36" stroke-width="0.35">40</text>
<rect x="1577.00" y="421.80" width="1234.00" height="1.50" fill="#e6e6e9"/>
<text x="1571.4" y="429.45" font-size="18.5" fill="#1c2b36" font-weight="normal" text-anchor="end" stroke="#1c2b36" stroke-width="0.35">30</text>
<rect x="1577.00" y="484.65" width="1234.00" height="1.50" fill="#e6e6e9"/>
<text x="1571.4" y="492.3" font-size="18.5" fill="#1c2b36" font-weight="normal" text-anchor="end" stroke="#1c2b36" stroke-width="0.35">20</text>
<rect x="1577.00" y="547.50" width="1234.00" height="1.50" fill="#e6e6e9"/>
<text x="1571.4" y="555.15" font-size="18.5" fill="#1c2b36" font-weight="normal" text-anchor="end" stroke="#1c2b36" stroke-width="0.35">10</text>
<text x="1571.4" y="618.0" font-size="18.5" fill="#1c2b36" font-weight="normal" text-anchor="end" stroke="#1c2b36" stroke-width="0.35">0</text>
<g clip-path="url(#c3)" fill="none" stroke-width="3.1" stroke-linejoin="round">
<polyline stroke="#3597cc" points="1576.4,606.6 1584.9,608.3 1608.9,608.3 1615.4,606.6 1621.7,608.3 1657.0,608.3 1663.6,606.6 1669.8,606.0 1676.9,608.3 1697.5,607.4 1704.3,604.9 1711.7,606.0 1718.4,607.4 1726.4,607.4 1732.6,608.3 1739.1,606.6 1746.2,607.4 1752.7,606.6 1759.8,607.4 1766.0,605.4 1773.1,606.6 1780.1,607.1 1787.2,608.3 1869.8,608.3 1876.3,606.6 1883.4,607.1 1890.5,606.0 1897.6,608.3 2082.3,607.1 2089.4,607.1 2096.5,606.0 2103.3,607.4 2110.6,608.3 2180.0,608.3 2180.0,608.3 2214.0,608.3 2220.2,606.6 2226.7,606.0 2254.1,606.6 2268.3,607.1 2275.4,608.3 2420.0,608.3 2426.7,606.6 2440.3,607.1 2447.4,608.3 2461.6,608.3 2467.8,606.0 2475.7,607.4 2482.2,608.3 2488.4,608.3 2494.9,606.6 2509.1,607.1 2516.2,608.3 2523.2,608.3 2530.0,606.0 2543.6,606.6 2550.7,608.3 2659.6,608.3 2666.1,606.0 2673.2,606.0 2680.3,608.3 2736.0,608.3 2742.3,606.6 2756.4,608.3 2770.0,608.3 2777.1,606.6 2791.2,608.3 2811.0,607.4"/>
<polyline stroke="#9079b6" points="1576.4,597.5 1581.5,589.0 1587.7,608.8 1657.0,608.8 1663.6,589.0 1669.8,589.0 1676.9,608.8 1683.9,593.3 1691.0,608.8 1697.5,589.0 1704.3,594.7 1711.7,593.3 1718.4,589.0 1726.4,593.3 1732.6,608.8 1739.1,591.8 1746.2,589.0 1752.7,590.4 1759.8,587.6 1766.0,589.0 1773.1,589.0 1780.1,589.0 1787.2,608.8 1794.3,608.8 1800.8,590.4 1808.4,608.8 1835.3,608.8 1842.4,597.5 1850.0,598.9 1857.1,608.8 1869.8,608.8 1876.3,601.7 1883.4,601.7 1890.5,601.7 1897.6,608.8 1917.4,608.8 1924.4,601.7 1931.5,608.8 1986.7,608.8 1993.2,600.3 2000.3,608.8 2007.4,608.8 2013.6,598.1 2020.7,608.8 2027.7,596.1 2034.8,608.8 2056.0,608.8 2062.3,598.9 2068.8,608.8 2075.8,608.8 2082.3,597.5 2089.4,598.9 2096.5,598.9 2103.3,600.3 2110.6,608.8 2131.0,608.8 2137.5,600.3 2144.6,608.8 2180.0,608.8 2180.0,606.0 2186.2,601.7 2192.7,608.8 2214.0,608.8 2220.2,603.2 2233.8,601.7 2240.8,603.2 2247.9,598.1 2254.1,599.8 2261.5,601.7 2268.3,601.7 2275.4,608.8 2281.9,608.8 2288.9,596.1 2295.4,608.8 2296.0,608.8 2302.2,573.4 2308.7,608.8 2315.8,608.8 2323.2,604.6 2330.0,608.8 2337.0,601.7 2344.1,608.8 2358.3,608.8 2364.5,598.1 2371.6,608.8 2385.1,608.8 2391.7,601.7 2398.4,601.7 2405.8,608.8 2420.0,608.8 2426.7,600.9 2433.3,598.1 2440.3,600.3 2447.4,608.8 2461.6,608.8 2467.8,590.4 2475.7,597.5 2482.2,608.8 2488.4,608.8 2494.9,546.0 2502.0,563.5 2509.1,594.7 2516.2,608.8 2523.2,608.8 2530.0,603.2 2543.6,604.6 2550.7,608.8 2563.4,608.8 2570.5,603.2 2577.6,608.8 2591.1,608.8 2598.2,603.7 2605.3,608.8 2625.7,608.8 2632.7,600.3 2639.8,608.8 2659.6,608.8 2666.1,601.7 2673.2,601.7 2680.3,608.8 2700.7,608.8 2707.7,601.7 2714.8,608.8 2736.0,608.8 2742.3,602.6 2749.3,603.7 2756.4,608.8 2770.0,608.8 2777.1,602.6 2784.1,600.9 2791.2,608.8 2803.9,608.8 2811.0,600.3"/>
<polyline stroke="#eebb00" points="1576.4,586.2 1581.5,522.5 1587.7,608.8 1608.9,608.8 1615.4,587.6 1621.7,608.8 1657.0,608.8 1663.6,583.4 1669.8,581.9 1676.9,604.6 1683.9,586.2 1691.0,608.8 1697.5,557.9 1704.3,587.6 1711.7,588.4 1718.4,584.8 1726.4,589.0 1732.6,608.8 1739.1,586.2 1746.2,580.5 1752.7,573.4 1759.8,538.1 1766.0,583.4 1773.1,583.4 1780.1,569.2 1787.2,608.8 1800.8,586.2 1808.4,608.8 1821.2,607.4 1835.3,608.8 1842.4,572.0 1850.0,584.8 1857.1,608.8 1869.8,608.8 1876.3,593.3 1883.4,589.0 1890.5,589.0 1897.6,608.8 1917.4,608.8 1924.4,515.4 1931.5,608.8 1952.7,608.8 1958.4,604.6 1965.5,608.8 1986.7,608.8 1993.2,591.8 2000.3,608.8 2013.6,580.5 2020.7,608.8 2027.7,589.0 2034.8,608.8 2056.0,608.8 2062.3,593.3 2068.8,608.8 2075.8,608.8 2082.3,589.0 2089.4,585.6 2096.5,589.0 2103.3,589.0 2110.6,608.8 2131.0,608.8 2137.5,577.7 2144.6,608.8 2172.0,607.4 2180.0,603.2 2180.0,604.6 2186.2,591.8 2192.7,608.8 2214.0,608.8 2220.2,593.3 2226.7,594.7 2233.8,591.3 2240.8,592.4 2247.9,591.8 2254.1,592.4 2261.5,590.4 2268.3,509.8 2275.4,608.8 2281.9,608.8 2288.9,480.1 2295.4,608.8 2302.2,502.7 2308.7,608.8 2315.8,608.8 2323.2,512.6 2330.0,608.8 2337.0,516.9 2344.1,608.8 2358.3,608.8 2364.5,499.9 2371.6,608.8 2385.1,608.8 2391.7,467.3 2398.4,441.9 2405.8,608.8 2420.0,608.8 2426.7,504.1 2433.3,497.0 2440.3,502.7 2447.4,608.8 2461.6,608.8 2467.8,478.7 2475.7,589.0 2482.2,608.8 2488.4,608.8 2494.9,458.8 2502.0,429.1 2509.1,540.9 2516.2,608.8 2523.2,608.8 2530.0,533.8 2537.1,583.4 2543.6,589.0 2550.7,608.8 2563.4,608.8 2570.5,569.2 2577.6,608.8 2591.1,608.8 2598.2,556.5 2605.3,608.8 2625.7,608.8 2632.7,563.5 2639.8,608.8 2659.6,608.8 2666.1,505.5 2673.2,492.8 2680.3,608.8 2700.7,608.8 2707.7,419.8 2714.8,608.8 2736.0,608.8 2742.3,580.5 2749.3,594.7 2756.4,608.8 2770.0,608.8 2777.1,573.4 2784.1,576.3 2791.2,608.8 2803.9,608.8 2811.0,593.3"/>
<polyline stroke="#7dbde0" points="1576.4,487.1 1581.5,492.8 1587.7,608.8 1608.9,608.8 1615.4,563.5 1621.7,608.8 1657.0,608.8 1663.6,572.0 1669.8,540.9 1676.9,594.7 1683.9,570.6 1691.0,608.8 1697.5,420.6 1704.3,574.9 1711.7,515.4 1718.4,566.4 1726.4,586.2 1732.6,608.8 1739.1,538.1 1746.2,565.0 1752.7,548.0 1759.8,482.9 1766.0,552.2 1773.1,478.7 1780.1,482.0 1787.2,608.8 1794.3,608.8 1800.8,573.4 1808.4,608.8 1821.2,608.8 1828.2,565.0 1835.3,608.8 1842.4,543.7 1850.0,562.1 1857.1,608.8 1869.8,608.8 1876.3,583.4 1883.4,577.7 1890.5,420.6 1897.6,608.8 1917.4,608.8 1924.4,480.1 1931.5,608.8 1952.7,608.8 1958.4,600.3 1965.5,608.8 1986.7,608.8 1993.2,443.3 2000.3,608.8 2007.4,603.2 2013.6,570.6 2020.7,608.8 2027.7,577.7 2034.8,608.8 2056.0,608.8 2062.3,585.6 2068.8,608.8 2075.8,608.8 2082.3,563.5 2089.4,548.0 2096.5,566.4 2103.3,420.6 2110.6,608.8 2131.0,608.8 2137.5,566.4 2144.6,608.8 2172.0,603.2 2180.0,589.0 2180.0,591.8 2186.2,567.8 2192.7,608.8 2214.0,608.8 2220.2,587.6 2226.7,580.5 2233.8,565.0 2240.8,576.3 2247.9,545.1 2254.1,533.8 2261.5,542.3 2268.3,490.0 2275.4,608.8 2281.9,608.8 2288.9,419.8 2295.4,608.8 2302.2,460.3 2308.7,608.8 2315.8,608.8 2323.2,475.3 2330.0,608.8 2337.0,466.8 2344.1,608.8 2358.3,608.8 2364.5,419.8 2371.6,608.8 2385.1,608.8 2391.7,419.8 2398.4,419.8 2405.8,608.8 2420.0,608.8 2426.7,433.4 2440.3,498.5 2447.4,608.8 2461.6,608.8 2467.8,440.5 2475.7,487.1 2482.2,608.8 2488.4,608.8 2494.9,419.8 2502.0,419.8 2509.1,540.9 2516.2,608.8 2523.2,608.8 2530.0,458.3 2537.1,504.1 2543.6,536.7 2550.7,608.8 2563.4,608.8 2570.5,495.6 2577.6,608.8 2591.1,608.8 2598.2,531.9 2605.3,608.8 2625.7,608.8 2632.7,490.5 2639.8,608.8 2659.6,608.8 2666.1,454.6 2673.2,447.0 2680.3,608.8 2700.7,608.8 2707.7,419.8 2714.8,608.8 2736.0,608.8 2742.3,443.3 2749.3,560.7 2756.4,608.8 2770.0,608.8 2777.1,419.8 2784.1,481.5 2791.2,608.8 2803.9,608.8 2811.0,419.8"/>
</g>
<rect x="1577.00" y="611.20" width="1234.00" height="1.30" fill="#80868a"/>
<rect x="1869.05" y="612.10" width="1.50" height="8.20" fill="#6f7478"/>
<text x="1869.8" y="637.9" font-size="18" fill="#1c2b36" font-weight="normal" text-anchor="middle" stroke="#1c2b36" stroke-width="0.35">20:45</text>
<rect x="2177.55" y="612.10" width="1.50" height="8.20" fill="#6f7478"/>
<text x="2178.3" y="637.9" font-size="18" fill="#1c2b36" font-weight="normal" text-anchor="middle" stroke="#1c2b36" stroke-width="0.35">21:00</text>
<rect x="2486.25" y="612.10" width="1.50" height="8.20" fill="#6f7478"/>
<text x="2487" y="637.9" font-size="18" fill="#1c2b36" font-weight="normal" text-anchor="middle" stroke="#1c2b36" stroke-width="0.35">21:15</text>
<rect x="2794.75" y="612.10" width="1.50" height="8.20" fill="#6f7478"/>
<text x="2795.5" y="637.9" font-size="18" fill="#1c2b36" font-weight="normal" text-anchor="middle" stroke="#1c2b36" stroke-width="0.35">21:30</text>
<rect x="2812.00" y="612.00" width="14.00" height="40.00" fill="#fff"/>
<rect x="1576.00" y="660.00" width="28.00" height="28.00" fill="#3598cc"/>
<text x="1619.0" y="680.5" font-size="19" fill="#1c2b36" font-weight="normal" text-anchor="start" stroke="#1c2b36" stroke-width="0.35">p50</text>
<rect x="1682.20" y="660.00" width="28.00" height="28.00" fill="#8e7bb8"/>
<text x="1725.2" y="680.5" font-size="19" fill="#1c2b36" font-weight="normal" text-anchor="start" stroke="#1c2b36" stroke-width="0.35">p75</text>
<rect x="1788.40" y="660.00" width="28.00" height="28.00" fill="#eebc00"/>
<text x="1831.4" y="680.5" font-size="19" fill="#1c2b36" font-weight="normal" text-anchor="start" stroke="#1c2b36" stroke-width="0.35">p90</text>
<rect x="1894.60" y="660.00" width="28.00" height="28.00" fill="#7fbfe0"/>
<text x="1937.6" y="680.5" font-size="19" fill="#1c2b36" font-weight="normal" text-anchor="start" stroke="#1c2b36" stroke-width="0.35">p95</text>
<rect x="2001.8" y="661" width="26" height="26" fill="none" stroke="#a98ad0" stroke-width="2"/>
<text x="2043.8" y="680.5" font-size="19" fill="#1c2b36" font-weight="normal" text-anchor="start" stroke="#1c2b36" stroke-width="0.35">p99</text>
<rect x="2108.0" y="661" width="26" height="26" fill="none" stroke="#f7cc30" stroke-width="2"/>
<text x="2150.0" y="680.5" font-size="19" fill="#1c2b36" font-weight="normal" text-anchor="start" stroke="#1c2b36" stroke-width="0.35">Max</text>
<text x="1538" y="776" font-size="24" fill="#1c2b36" font-weight="normal" text-anchor="start" textLength="176" lengthAdjust="spacingAndGlyphs" stroke="#1c2b36" stroke-width="0.35">% of Time Spent</text>
<path d="M1742.7 763L1758.7 763L1750.7 773Z" fill="#656d76"/>
<text x="1803.4" y="776" font-size="24" fill="#1c2b36" font-weight="normal" text-anchor="start" textLength="26" lengthAdjust="spacingAndGlyphs" stroke="#1c2b36" stroke-width="0.35">by</text>
<text x="1874" y="776" font-size="24" fill="#1c2b36" font-weight="normal" text-anchor="start" textLength="52" lengthAdjust="spacingAndGlyphs" stroke="#1c2b36" stroke-width="0.35">Type</text>
<path d="M1954.6 763L1971.1 763L1962.85 773Z" fill="#656d76"/>
<g transform="translate(2725.5,755.5)" fill="#8e949b"><path d="M0.5 0.5H9.5L6.7 3.3L10.5 7.1L7.4 10.2L3.6 6.4L0.5 9.5Z"/><path d="M24.5 0.5H15.5L18.3 3.3L14.5 7.1L17.6 10.2L21.4 6.4L24.5 9.5Z"/><path d="M0.5 24.5H9.5L6.7 21.7L10.5 17.9L7.4 14.8L3.6 18.6L0.5 15.5Z"/><path d="M24.5 24.5H15.5L18.3 21.7L14.5 17.9L17.6 14.8L21.4 18.6L24.5 15.5Z"/></g>
<g transform="translate(2776.3,755.5)" fill="none" stroke="#8e949b" stroke-width="3.2"><path d="M5.8 11.8H3.2a1.5 1.5 0 0 0 -1.5 1.5V21.8a1.5 1.5 0 0 0 1.5 1.5H19.8a1.5 1.5 0 0 0 1.5 -1.5V13.3a1.5 1.5 0 0 0 -1.5 -1.5H17.2"/><path d="M11.5 17.5V5.5" stroke-linecap="round"/></g><path d="M2781.8 762.5L2787.8 755.8L2793.8 762.5Z" fill="#8e949b"/>
<rect x="1514.00" y="800.00" width="1306.00" height="2.00" fill="#dcdbe0"/>
<text x="1571.4" y="835.3" font-size="18.5" fill="#1c2b36" font-weight="normal" text-anchor="end" stroke="#1c2b36" stroke-width="0.35">100</text>
<text x="1571.4" y="885.66" font-size="18.5" fill="#1c2b36" font-weight="normal" text-anchor="end" stroke="#1c2b36" stroke-width="0.35">80</text>
<text x="1571.4" y="936.02" font-size="18.5" fill="#1c2b36" font-weight="normal" text-anchor="end" stroke="#1c2b36" stroke-width="0.35">60</text>
<text x="1571.4" y="986.38" font-size="18.5" fill="#1c2b36" font-weight="normal" text-anchor="end" stroke="#1c2b36" stroke-width="0.35">40</text>
<text x="1571.4" y="1036.74" font-size="18.5" fill="#1c2b36" font-weight="normal" text-anchor="end" stroke="#1c2b36" stroke-width="0.35">20</text>
<text x="1571.4" y="1087.1000000000001" font-size="18.5" fill="#1c2b36" font-weight="normal" text-anchor="end" stroke="#1c2b36" stroke-width="0.35">0</text>
<g clip-path="url(#c4)">
<rect x="1576" y="828.4" width="1235.9" height="251.8" fill="#8733a3"/>
<polygon fill="#9a5083" points="1576.1,829.4 2811.9,829.4 2811.9,832.1 2805.2,832.1 2798.1,832.1 2791.6,832.1 2784.5,832.1 2777.4,832.1 2770.3,832.1 2763.3,832.1 2756.2,832.1 2749.7,832.1 2742.9,832.1 2735.8,832.1 2729.3,832.1 2722.2,832.1 2715.1,832.1 2708.6,832.1 2701.8,832.1 2694.8,832.1 2687.7,832.1 2681.2,832.1 2674.1,832.1 2667.0,832.1 2660.8,832.1 2653.7,832.1 2646.6,832.1 2639.6,832.1 2633.1,832.1 2626.0,832.1 2618.9,832.1 2612.4,832.1 2605.6,832.1 2598.5,832.1 2591.5,832.1 2584.9,832.1 2577.9,832.1 2571.6,832.1 2564.6,832.1 2557.2,832.1 2550.4,832.1 2543.3,832.1 2536.3,832.1 2529.2,832.1 2522.7,832.1 2516.4,832.1 2509.9,832.1 2502.9,832.1 2495.8,832.1 2488.7,832.1 2481.6,832.1 2474.6,832.1 2468.0,832.1 2461.0,832.1 2453.9,832.1 2447.1,832.1 2440.6,832.1 2433.5,832.1 2426.4,832.1 2420.2,832.1 2413.7,832.1 2406.6,832.1 2399.5,832.1 2392.5,832.1 2385.4,832.6 2378.3,832.1 2371.2,832.1 2364.2,832.1 2357.7,832.1 2350.6,832.1 2343.8,832.6 2336.7,832.6 2329.6,832.1 2323.1,832.1 2316.0,832.6 2309.8,832.1 2303.3,832.6 2296.2,832.6 2289.2,832.1 2282.1,832.6 2275.9,833.2 2269.3,834.1 2262.3,834.1 2255.2,834.9 2248.1,835.5 2241.0,836.0 2234.0,835.5 2226.9,836.9 2219.8,836.0 2212.7,836.9 2206.6,837.7 2199.5,836.9 2192.4,836.0 2185.4,835.5 2179.1,836.0 2172.6,836.0 2165.5,836.9 2158.5,836.0 2151.4,836.0 2144.3,836.9 2137.2,837.7 2131.0,841.1 2124.5,839.7 2117.4,838.3 2110.4,836.9 2103.3,836.0 2097.6,835.5 2090.6,836.0 2083.5,836.9 2076.4,837.7 2069.3,836.9 2062.3,836.9 2055.2,840.6 2048.1,841.1 2041.6,837.7 2035.4,836.0 2028.3,834.9 2021.2,835.5 2014.2,836.0 2008.5,836.9 2001.4,836.9 1994.4,836.0 1987.3,836.9 1980.2,836.9 1973.1,836.9 1966.6,836.9 1959.0,836.0 1951.9,836.9 1944.8,834.9 1937.8,834.9 1931.5,834.9 1925.0,836.0 1918.0,836.9 1910.9,836.9 1903.8,836.9 1897.3,836.9 1889.7,838.3 1882.6,841.1 1876.9,842.0 1869.8,840.6 1862.8,841.1 1855.7,835.5 1849.2,836.9 1842.4,835.5 1835.9,834.9 1828.8,834.1 1821.7,836.0 1814.7,835.5 1808.2,834.9 1801.1,835.5 1794.3,834.9 1787.2,834.1 1780.7,835.5 1773.6,834.9 1767.1,834.1 1760.1,834.9 1753.3,835.5 1746.2,836.0 1739.7,834.9 1732.6,834.9 1725.5,834.9 1718.5,835.5 1712.0,834.9 1704.9,835.5 1697.8,834.9 1690.7,834.1 1683.7,834.9 1676.9,833.5 1670.4,834.9 1663.3,836.0 1657.1,834.9 1650.0,834.9 1642.9,833.2 1636.4,834.1 1629.3,834.1 1622.3,834.9 1615.2,835.5 1608.7,834.9 1601.9,834.1 1595.4,836.0 1588.3,838.3 1581.2,835.5 1576.1,834.9"/>
<polygon fill="#2eaedd" points="1576.1,834.9 1581.2,836.0 1588.3,841.7 1595.4,842.5 1601.9,873.7 1608.7,846.8 1615.2,865.2 1622.3,850.2 1629.3,850.2 1636.4,851.0 1642.9,846.2 1650.0,850.5 1657.1,848.2 1663.3,859.5 1670.4,885.8 1676.9,860.9 1683.7,855.3 1690.7,856.7 1697.8,839.1 1704.9,842.5 1712.0,851.0 1718.5,856.7 1725.5,871.7 1732.6,872.3 1739.7,859.5 1746.2,842.5 1753.3,855.3 1760.1,862.3 1767.1,845.4 1773.6,840.6 1780.7,868.0 1787.2,896.3 1794.3,857.5 1801.1,870.0 1808.2,868.9 1814.7,862.3 1821.7,844.0 1828.8,852.4 1835.9,862.3 1842.4,855.3 1849.2,843.4 1855.7,880.2 1862.8,848.2 1869.8,848.2 1876.9,849.0 1882.6,850.2 1889.7,858.1 1897.3,868.0 1903.8,853.0 1910.9,869.4 1918.0,876.5 1925.0,907.6 1931.5,839.1 1937.8,840.6 1944.8,839.7 1951.9,865.2 1959.0,844.5 1966.6,866.6 1973.1,865.2 1980.2,880.7 1987.3,894.3 1994.4,874.5 2001.4,872.3 2008.5,873.7 2014.2,868.0 2021.2,857.5 2028.3,841.1 2035.4,846.2 2041.6,863.8 2048.1,889.2 2055.2,851.9 2062.3,851.9 2069.3,872.3 2076.4,881.3 2083.5,846.2 2090.6,851.0 2097.6,876.5 2103.3,880.7 2110.4,882.2 2117.4,896.3 2124.5,851.0 2131.0,850.2 2137.2,870.0 2144.3,859.5 2151.4,866.6 2158.5,878.5 2165.5,861.5 2172.6,860.9 2179.1,846.8 2185.4,886.4 2192.4,887.8 2199.5,887.0 2206.6,877.9 2212.7,866.6 2219.8,848.2 2226.9,853.9 2234.0,844.5 2241.0,852.4 2248.1,863.8 2255.2,873.7 2262.3,866.6 2269.3,859.5 2275.9,851.9 2282.1,853.9 2289.2,835.5 2296.2,833.2 2303.3,833.2 2309.8,834.9 2316.0,839.7 2323.1,832.6 2329.6,832.1 2336.7,834.1 2343.8,836.0 2350.6,833.2 2357.7,832.1 2364.2,832.6 2371.2,834.1 2378.3,834.9 2385.4,836.9 2392.5,832.6 2399.5,834.9 2406.6,834.1 2413.7,834.1 2420.2,832.6 2426.4,832.1 2433.5,833.2 2440.6,832.6 2447.1,833.2 2453.9,834.1 2461.0,833.2 2468.0,834.1 2474.6,835.5 2481.6,836.9 2488.7,834.1 2495.8,832.6 2502.9,832.6 2509.9,833.2 2516.4,832.6 2522.7,833.2 2529.2,832.6 2536.3,834.1 2543.3,833.2 2550.4,832.6 2557.2,834.9 2564.6,836.0 2571.6,834.1 2577.9,833.2 2584.9,834.1 2591.5,833.2 2598.5,832.6 2605.6,833.2 2612.4,834.1 2618.9,834.9 2626.0,835.5 2633.1,834.1 2639.6,834.1 2646.6,833.2 2653.7,834.9 2660.8,834.1 2667.0,833.2 2674.1,833.2 2681.2,834.9 2687.7,836.9 2694.8,836.0 2701.8,834.1 2708.6,832.6 2715.1,833.2 2722.2,834.1 2729.3,834.1 2735.8,834.9 2742.9,834.9 2749.7,841.1 2756.2,836.0 2763.3,834.9 2770.3,835.5 2777.4,836.0 2784.5,835.5 2791.6,836.9 2798.1,835.5 2805.2,834.9 2811.9,836.9 2811.9,1022.2 2805.2,1013.7 2798.1,998.2 2791.6,996.8 2784.5,985.4 2777.4,1038.6 2770.3,1035.8 2763.3,1043.4 2756.2,1032.1 2749.7,1005.8 2742.9,1039.2 2735.8,1028.4 2729.3,1020.8 2722.2,996.2 2715.1,1043.4 2708.6,1050.0 2701.8,1046.3 2694.8,1043.4 2687.7,1030.1 2681.2,1039.2 2674.1,1036.9 2667.0,1042.6 2660.8,1027.3 2653.7,1013.2 2646.6,1048.3 2639.6,1051.1 2633.1,1048.3 2626.0,1035.0 2618.9,1044.3 2612.4,1043.4 2605.6,1022.2 2598.5,1035.0 2591.5,1044.3 2584.9,1035.0 2577.9,1049.1 2571.6,1044.9 2564.6,1036.4 2557.2,1051.9 2550.4,1053.4 2543.3,981.2 2536.3,992.5 2529.2,1018.0 2522.7,1012.3 2516.4,988.3 2509.9,986.0 2502.9,1002.4 2495.8,1027.9 2488.7,1051.9 2481.6,1038.6 2474.6,1038.6 2468.0,1054.8 2461.0,1044.9 2453.9,1018.0 2447.1,990.5 2440.6,1005.2 2433.5,1023.6 2426.4,1011.5 2420.2,1046.3 2413.7,1040.6 2406.6,1030.1 2399.5,1030.7 2392.5,1022.8 2385.4,1021.7 2378.3,1003.8 2371.2,996.8 2364.2,1019.4 2357.7,1029.3 2350.6,1047.7 2343.8,1028.4 2336.7,1032.1 2329.6,1060.4 2323.1,1042.0 2316.0,1029.3 2309.8,988.8 2303.3,1013.2 2296.2,1010.3 2289.2,1022.8 2282.1,1011.5 2275.9,1005.2 2269.3,1018.0 2262.3,1012.3 2255.2,1003.8 2248.1,982.6 2241.0,960.0 2234.0,951.5 2226.9,931.7 2219.8,920.4 2212.7,921.8 2206.6,921.8 2199.5,926.0 2192.4,914.7 2185.4,920.4 2179.1,892.1 2172.6,913.3 2165.5,940.2 2158.5,927.4 2151.4,911.9 2144.3,897.7 2137.2,889.2 2131.0,882.2 2124.5,874.5 2117.4,907.6 2110.4,900.0 2103.3,907.6 2097.6,910.5 2090.6,918.9 2083.5,910.5 2076.4,914.7 2069.3,903.4 2062.3,883.6 2055.2,877.9 2048.1,907.6 2041.6,903.4 2035.4,900.0 2028.3,894.9 2021.2,906.2 2014.2,926.0 2008.5,923.2 2001.4,909.0 1994.4,900.0 1987.3,910.5 1980.2,917.5 1973.1,892.1 1966.6,894.9 1959.0,886.4 1951.9,897.7 1944.8,870.8 1937.8,879.3 1931.5,894.9 1925.0,926.0 1918.0,924.6 1910.9,934.5 1903.8,894.3 1897.3,907.6 1889.7,909.0 1882.6,883.0 1876.9,879.3 1869.8,876.5 1862.8,873.7 1855.7,900.5 1849.2,927.4 1842.4,904.8 1835.9,906.2 1828.8,890.6 1821.7,865.2 1814.7,876.5 1808.2,882.2 1801.1,886.4 1794.3,886.4 1787.2,918.9 1780.7,894.9 1773.6,877.9 1767.1,909.0 1760.1,903.4 1753.3,893.5 1746.2,897.7 1739.7,894.9 1732.6,887.8 1725.5,886.4 1718.5,876.5 1712.0,875.1 1704.9,880.7 1697.8,863.8 1690.7,892.1 1683.7,902.0 1676.9,928.8 1670.4,913.3 1663.3,877.9 1657.1,865.5 1650.0,869.4 1642.9,860.9 1636.4,862.3 1629.3,861.5 1622.3,865.2 1615.2,876.5 1608.7,870.0 1601.9,896.3 1595.4,872.8 1588.3,880.7 1581.2,957.1 1576.1,1005.2"/>
<polygon fill="#7266cc" points="1576.1,1005.2 1581.2,957.1 1588.3,880.7 1595.4,872.8 1601.9,896.3 1608.7,870.0 1615.2,876.5 1622.3,865.2 1629.3,861.5 1636.4,862.3 1642.9,860.9 1650.0,869.4 1657.1,865.5 1663.3,877.9 1670.4,913.3 1676.9,928.8 1683.7,902.0 1690.7,892.1 1697.8,863.8 1704.9,880.7 1712.0,875.1 1718.5,876.5 1725.5,886.4 1732.6,887.8 1739.7,894.9 1746.2,897.7 1753.3,893.5 1760.1,903.4 1767.1,909.0 1773.6,877.9 1780.7,894.9 1787.2,918.9 1794.3,886.4 1801.1,886.4 1808.2,882.2 1814.7,876.5 1821.7,865.2 1828.8,890.6 1835.9,906.2 1842.4,904.8 1849.2,927.4 1855.7,900.5 1862.8,873.7 1869.8,876.5 1876.9,879.3 1882.6,883.0 1889.7,909.0 1897.3,907.6 1903.8,894.3 1910.9,934.5 1918.0,924.6 1925.0,926.0 1931.5,894.9 1937.8,879.3 1944.8,870.8 1951.9,897.7 1959.0,886.4 1966.6,894.9 1973.1,892.1 1980.2,917.5 1987.3,910.5 1994.4,900.0 2001.4,909.0 2008.5,923.2 2014.2,926.0 2021.2,906.2 2028.3,894.9 2035.4,900.0 2041.6,903.4 2048.1,907.6 2055.2,877.9 2062.3,883.6 2069.3,903.4 2076.4,914.7 2083.5,910.5 2090.6,918.9 2097.6,910.5 2103.3,907.6 2110.4,900.0 2117.4,907.6 2124.5,874.5 2131.0,882.2 2137.2,889.2 2144.3,897.7 2151.4,911.9 2158.5,927.4 2165.5,940.2 2172.6,913.3 2179.1,892.1 2185.4,920.4 2192.4,914.7 2199.5,926.0 2206.6,921.8 2212.7,921.8 2219.8,920.4 2226.9,931.7 2234.0,951.5 2241.0,960.0 2248.1,982.6 2255.2,1003.8 2262.3,1012.3 2269.3,1018.0 2275.9,1005.2 2282.1,1011.5 2289.2,1022.8 2296.2,1010.3 2303.3,1013.2 2309.8,988.8 2316.0,1029.3 2323.1,1042.0 2329.6,1060.4 2336.7,1032.1 2343.8,1028.4 2350.6,1047.7 2357.7,1029.3 2364.2,1019.4 2371.2,996.8 2378.3,1003.8 2385.4,1021.7 2392.5,1022.8 2399.5,1030.7 2406.6,1030.1 2413.7,1040.6 2420.2,1046.3 2426.4,1011.5 2433.5,1023.6 2440.6,1005.2 2447.1,990.5 2453.9,1018.0 2461.0,1044.9 2468.0,1054.8 2474.6,1038.6 2481.6,1038.6 2488.7,1051.9 2495.8,1027.9 2502.9,1002.4 2509.9,986.0 2516.4,988.3 2522.7,1012.3 2529.2,1018.0 2536.3,992.5 2543.3,981.2 2550.4,1053.4 2557.2,1051.9 2564.6,1036.4 2571.6,1044.9 2577.9,1049.1 2584.9,1035.0 2591.5,1044.3 2598.5,1035.0 2605.6,1022.2 2612.4,1043.4 2618.9,1044.3 2626.0,1035.0 2633.1,1048.3 2639.6,1051.1 2646.6,1048.3 2653.7,1013.2 2660.8,1027.3 2667.0,1042.6 2674.1,1036.9 2681.2,1039.2 2687.7,1030.1 2694.8,1043.4 2701.8,1046.3 2708.6,1050.0 2715.1,1043.4 2722.2,996.2 2729.3,1020.8 2735.8,1028.4 2742.9,1039.2 2749.7,1005.8 2756.2,1032.1 2763.3,1043.4 2770.3,1035.8 2777.4,1038.6 2784.5,985.4 2791.6,996.8 2798.1,998.2 2805.2,1013.7 2811.9,1022.2 2811.9,1026.5 2805.2,1016.6 2798.1,1001.0 2791.6,1001.0 2784.5,986.9 2777.4,1038.6 2770.3,1037.8 2763.3,1043.4 2756.2,1032.1 2749.7,1005.8 2742.9,1039.2 2735.8,1028.4 2729.3,1020.8 2722.2,996.2 2715.1,1043.4 2708.6,1050.0 2701.8,1046.3 2694.8,1043.4 2687.7,1030.1 2681.2,1039.2 2674.1,1036.9 2667.0,1042.6 2660.8,1027.3 2653.7,1013.2 2646.6,1048.3 2639.6,1051.1 2633.1,1048.3 2626.0,1035.0 2618.9,1044.3 2612.4,1043.4 2605.6,1022.2 2598.5,1035.0 2591.5,1044.3 2584.9,1035.0 2577.9,1049.1 2571.6,1044.9 2564.6,1036.4 2557.2,1051.9 2550.4,1053.4 2543.3,981.2 2536.3,992.5 2529.2,1018.0 2522.7,1012.3 2516.4,988.3 2509.9,986.0 2502.9,1002.4 2495.8,1027.9 2488.7,1051.9 2481.6,1038.6 2474.6,1038.6 2468.0,1054.8 2461.0,1044.9 2453.9,1018.0 2447.1,990.5 2440.6,1005.2 2433.5,1023.6 2426.4,1011.5 2420.2,1046.3 2413.7,1040.6 2406.6,1030.1 2399.5,1030.7 2392.5,1022.8 2385.4,1021.7 2378.3,1003.8 2371.2,996.8 2364.2,1019.4 2357.7,1029.3 2350.6,1047.7 2343.8,1028.4 2336.7,1032.1 2329.6,1060.4 2323.1,1042.0 2316.0,1029.3 2309.8,988.8 2303.3,1013.2 2296.2,1010.3 2289.2,1022.8 2282.1,1011.5 2275.9,1005.2 2269.3,1019.4 2262.3,1013.7 2255.2,1005.2 2248.1,985.4 2241.0,968.5 2234.0,962.8 2226.9,943.0 2219.8,933.1 2212.7,934.5 2206.6,933.1 2199.5,943.0 2192.4,930.3 2185.4,934.5 2179.1,910.5 2172.6,933.1 2165.5,954.3 2158.5,943.0 2151.4,947.2 2144.3,928.8 2137.2,918.9 2131.0,903.4 2124.5,897.2 2117.4,924.6 2110.4,914.7 2103.3,926.0 2097.6,937.3 2090.6,936.8 2083.5,930.3 2076.4,931.1 2069.3,927.4 2062.3,906.2 2055.2,903.4 2048.1,926.6 2041.6,924.6 2035.4,911.9 2028.3,910.5 2021.2,928.8 2014.2,941.6 2008.5,937.3 2001.4,928.3 1994.4,920.4 1987.3,934.5 1980.2,937.3 1973.1,913.3 1966.6,912.4 1959.0,902.0 1951.9,909.0 1944.8,885.0 1937.8,887.8 1931.5,924.6 1925.0,940.7 1918.0,938.7 1910.9,949.2 1903.8,921.8 1897.3,927.4 1889.7,927.4 1882.6,907.6 1876.9,904.8 1869.8,902.0 1862.8,902.0 1855.7,931.7 1849.2,945.8 1842.4,924.6 1835.9,921.8 1828.8,904.8 1821.7,879.3 1814.7,892.1 1808.2,897.7 1801.1,901.1 1794.3,902.0 1787.2,927.4 1780.7,911.3 1773.6,892.6 1767.1,920.4 1760.1,918.9 1753.3,907.6 1746.2,912.4 1739.7,910.5 1732.6,902.0 1725.5,900.5 1718.5,892.1 1712.0,890.6 1704.9,896.3 1697.8,870.0 1690.7,906.2 1683.7,914.7 1676.9,938.7 1670.4,923.2 1663.3,892.1 1657.1,884.1 1650.0,885.0 1642.9,878.5 1636.4,877.9 1629.3,873.7 1622.3,876.5 1615.2,887.8 1608.7,876.5 1601.9,901.1 1595.4,877.9 1588.3,885.8 1581.2,957.1 1576.1,1008.1"/>
<polyline fill="none" stroke="#d9a0d8" stroke-width="0.8" stroke-opacity="0.45" points="1576.1,1005.2 1581.2,957.1 1588.3,880.7 1595.4,872.8 1601.9,896.3 1608.7,870.0 1615.2,876.5 1622.3,865.2 1629.3,861.5 1636.4,862.3 1642.9,860.9 1650.0,869.4 1657.1,865.5 1663.3,877.9 1670.4,913.3 1676.9,928.8 1683.7,902.0 1690.7,892.1 1697.8,863.8 1704.9,880.7 1712.0,875.1 1718.5,876.5 1725.5,886.4 1732.6,887.8 1739.7,894.9 1746.2,897.7 1753.3,893.5 1760.1,903.4 1767.1,909.0 1773.6,877.9 1780.7,894.9 1787.2,918.9 1794.3,886.4 1801.1,886.4 1808.2,882.2 1814.7,876.5 1821.7,865.2 1828.8,890.6 1835.9,906.2 1842.4,904.8 1849.2,927.4 1855.7,900.5 1862.8,873.7 1869.8,876.5 1876.9,879.3 1882.6,883.0 1889.7,909.0 1897.3,907.6 1903.8,894.3 1910.9,934.5 1918.0,924.6 1925.0,926.0 1931.5,894.9 1937.8,879.3 1944.8,870.8 1951.9,897.7 1959.0,886.4 1966.6,894.9 1973.1,892.1 1980.2,917.5 1987.3,910.5 1994.4,900.0 2001.4,909.0 2008.5,923.2 2014.2,926.0 2021.2,906.2 2028.3,894.9 2035.4,900.0 2041.6,903.4 2048.1,907.6 2055.2,877.9 2062.3,883.6 2069.3,903.4 2076.4,914.7 2083.5,910.5 2090.6,918.9 2097.6,910.5 2103.3,907.6 2110.4,900.0 2117.4,907.6 2124.5,874.5 2131.0,882.2 2137.2,889.2 2144.3,897.7 2151.4,911.9 2158.5,927.4 2165.5,940.2 2172.6,913.3 2179.1,892.1 2185.4,920.4 2192.4,914.7 2199.5,926.0 2206.6,921.8 2212.7,921.8 2219.8,920.4 2226.9,931.7 2234.0,951.5 2241.0,960.0 2248.1,982.6 2255.2,1003.8 2262.3,1012.3 2269.3,1018.0 2275.9,1005.2 2282.1,1011.5 2289.2,1022.8 2296.2,1010.3 2303.3,1013.2 2309.8,988.8 2316.0,1029.3 2323.1,1042.0 2329.6,1060.4 2336.7,1032.1 2343.8,1028.4 2350.6,1047.7 2357.7,1029.3 2364.2,1019.4 2371.2,996.8 2378.3,1003.8 2385.4,1021.7 2392.5,1022.8 2399.5,1030.7 2406.6,1030.1 2413.7,1040.6 2420.2,1046.3 2426.4,1011.5 2433.5,1023.6 2440.6,1005.2 2447.1,990.5 2453.9,1018.0 2461.0,1044.9 2468.0,1054.8 2474.6,1038.6 2481.6,1038.6 2488.7,1051.9 2495.8,1027.9 2502.9,1002.4 2509.9,986.0 2516.4,988.3 2522.7,1012.3 2529.2,1018.0 2536.3,992.5 2543.3,981.2 2550.4,1053.4 2557.2,1051.9 2564.6,1036.4 2571.6,1044.9 2577.9,1049.1 2584.9,1035.0 2591.5,1044.3 2598.5,1035.0 2605.6,1022.2 2612.4,1043.4 2618.9,1044.3 2626.0,1035.0 2633.1,1048.3 2639.6,1051.1 2646.6,1048.3 2653.7,1013.2 2660.8,1027.3 2667.0,1042.6 2674.1,1036.9 2681.2,1039.2 2687.7,1030.1 2694.8,1043.4 2701.8,1046.3 2708.6,1050.0 2715.1,1043.4 2722.2,996.2 2729.3,1020.8 2735.8,1028.4 2742.9,1039.2 2749.7,1005.8 2756.2,1032.1 2763.3,1043.4 2770.3,1035.8 2777.4,1038.6 2784.5,985.4 2791.6,996.8 2798.1,998.2 2805.2,1013.7 2811.9,1022.2"/>
<rect x="1576" y="827.4" width="1235.9" height="2.4" fill="#2f9fd6"/>
</g>
<rect x="1576.00" y="1081.80" width="1235.00" height="1.30" fill="#80868a"/>
<rect x="1869.05" y="1082.70" width="1.50" height="8.20" fill="#6f7478"/>
<text x="1869.8" y="1108.5" font-size="18" fill="#1c2b36" font-weight="normal" text-anchor="middle" stroke="#1c2b36" stroke-width="0.35">20:45</text>
<rect x="2177.55" y="1082.70" width="1.50" height="8.20" fill="#6f7478"/>
<text x="2178.3" y="1108.5" font-size="18" fill="#1c2b36" font-weight="normal" text-anchor="middle" stroke="#1c2b36" stroke-width="0.35">21:00</text>
<rect x="2486.25" y="1082.70" width="1.50" height="8.20" fill="#6f7478"/>
<text x="2487" y="1108.5" font-size="18" fill="#1c2b36" font-weight="normal" text-anchor="middle" stroke="#1c2b36" stroke-width="0.35">21:15</text>
<rect x="2794.75" y="1082.70" width="1.50" height="8.20" fill="#6f7478"/>
<text x="2795.5" y="1108.5" font-size="18" fill="#1c2b36" font-weight="normal" text-anchor="middle" stroke="#1c2b36" stroke-width="0.35">21:30</text>
<rect x="2812.00" y="1082.00" width="14.00" height="40.00" fill="#fff"/>
<rect x="1576.00" y="1130.00" width="28.00" height="28.00" fill="#964f80"/>
<text x="1618.5" y="1150.5" font-size="19" fill="#1c2b36" font-weight="normal" text-anchor="start" stroke="#1c2b36" stroke-width="0.35">db</text>
<rect x="1672.30" y="1130.00" width="28.00" height="28.00" fill="#8a31a6"/>
<text x="1714.8" y="1150.5" font-size="19" fill="#1c2b36" font-weight="normal" text-anchor="start" stroke="#1c2b36" stroke-width="0.35">http</text>
<rect x="1784.00" y="1130.00" width="28.00" height="28.00" fill="#2aaede"/>
<text x="1826.5" y="1150.5" font-size="19" fill="#1c2b36" font-weight="normal" text-anchor="start" stroke="#1c2b36" stroke-width="0.35">mongodb</text>
<rect x="1942.00" y="1130.00" width="28.00" height="28.00" fill="#c68bd0"/>
<text x="1984.5" y="1150.5" font-size="19" fill="#1c2b36" font-weight="normal" text-anchor="start" stroke="#1c2b36" stroke-width="0.35">redis</text>
<rect x="2060.00" y="1130.00" width="28.00" height="28.00" fill="#6f62cf"/>
<text x="2102.5" y="1150.5" font-size="19" fill="#1c2b36" font-weight="normal" text-anchor="start" stroke="#1c2b36" stroke-width="0.35">template</text>
<rect x="2210.00" y="1130.00" width="28.00" height="28.00" fill="#8a31a6"/>
<text x="2252.5" y="1150.5" font-size="19" fill="#1c2b36" font-weight="normal" text-anchor="start" stroke="#1c2b36" stroke-width="0.35">web</text>
<text x="157.3" y="1246.5" font-size="24" fill="#1c2b36" font-weight="normal" text-anchor="start" textLength="219.5" lengthAdjust="spacingAndGlyphs" stroke="#1c2b36" stroke-width="0.35">Latency Distribution</text>
<rect x="150.00" y="1270.00" width="2670.00" height="2.00" fill="#dcdbe0"/>
<rect x="2513" y="1213" width="300" height="48.5" rx="5" fill="#fff" stroke="#dcdbe0" stroke-width="2"/>
<rect x="2590.00" y="1212.00" width="80.00" height="50.50" fill="#006bc7"/>
<rect x="2746.50" y="1213.00" width="1.80" height="48.50" fill="#dcdbe0"/>
<text x="2551" y="1246.2" font-size="24" fill="#1c2b36" font-weight="normal" text-anchor="middle" textLength="38.6" lengthAdjust="spacingAndGlyphs" stroke="#1c2b36" stroke-width="0.35">p90</text>
<text x="2630" y="1246.2" font-size="24" fill="#fff" font-weight="normal" text-anchor="middle" textLength="38.6" lengthAdjust="spacingAndGlyphs" stroke="#fff" stroke-width="0.35">p95</text>
<text x="2708.5" y="1246.2" font-size="24" fill="#1c2b36" font-weight="normal" text-anchor="middle" textLength="38.6" lengthAdjust="spacingAndGlyphs" stroke="#1c2b36" stroke-width="0.35">p99</text>
<text x="2780" y="1246.2" font-size="24" fill="#1c2b36" font-weight="normal" text-anchor="middle" textLength="27" lengthAdjust="spacingAndGlyphs" stroke="#1c2b36" stroke-width="0.35">All</text>
<text x="281" y="1307.8" font-size="18.5" fill="#1c2b36" font-weight="normal" text-anchor="middle" textLength="30" lengthAdjust="spacingAndGlyphs" stroke="#1c2b36" stroke-width="0.35">p50</text>
<text x="426.7" y="1307.8" font-size="18.5" fill="#1c2b36" font-weight="normal" text-anchor="middle" textLength="30" lengthAdjust="spacingAndGlyphs" stroke="#1c2b36" stroke-width="0.35">p75</text>
<text x="1144" y="1307.8" font-size="18.5" fill="#1c2b36" font-weight="normal" text-anchor="middle" textLength="30" lengthAdjust="spacingAndGlyphs" stroke="#1c2b36" stroke-width="0.35">p90</text>
<text x="2798" y="1307.8" font-size="18.5" fill="#1c2b36" font-weight="normal" text-anchor="middle" textLength="30" lengthAdjust="spacingAndGlyphs" stroke="#1c2b36" stroke-width="0.35">p95</text>
<rect x="249.50" y="1345.30" width="2550.50" height="1.50" fill="#e6e6e9"/>
<line x1="283" y1="1317" x2="283" y2="1422" stroke="#d5d5d9" stroke-width="1.7" stroke-dasharray="9,9"/>
<line x1="428.7" y1="1317" x2="428.7" y2="1422" stroke="#d5d5d9" stroke-width="1.7" stroke-dasharray="9,9"/>
<line x1="1146" y1="1317" x2="1146" y2="1422" stroke="#d5d5d9" stroke-width="1.7" stroke-dasharray="9,9"/>
<line x1="2800" y1="1317" x2="2800" y2="1422" stroke="#d5d5d9" stroke-width="1.7" stroke-dasharray="9,9"/>
<text x="205.6" y="1351.7" font-size="18" fill="#1c2b36" font-weight="normal" text-anchor="end" textLength="39" lengthAdjust="spacingAndGlyphs" stroke="#1c2b36" stroke-width="0.35">600k</text>
<rect x="223.00" y="1327.00" width="24.00" height="100.00" fill="#3399cc"/>
<rect x="90" y="1335" width="2790" height="87" fill="url(#fade)"/>
</svg></body></html>
